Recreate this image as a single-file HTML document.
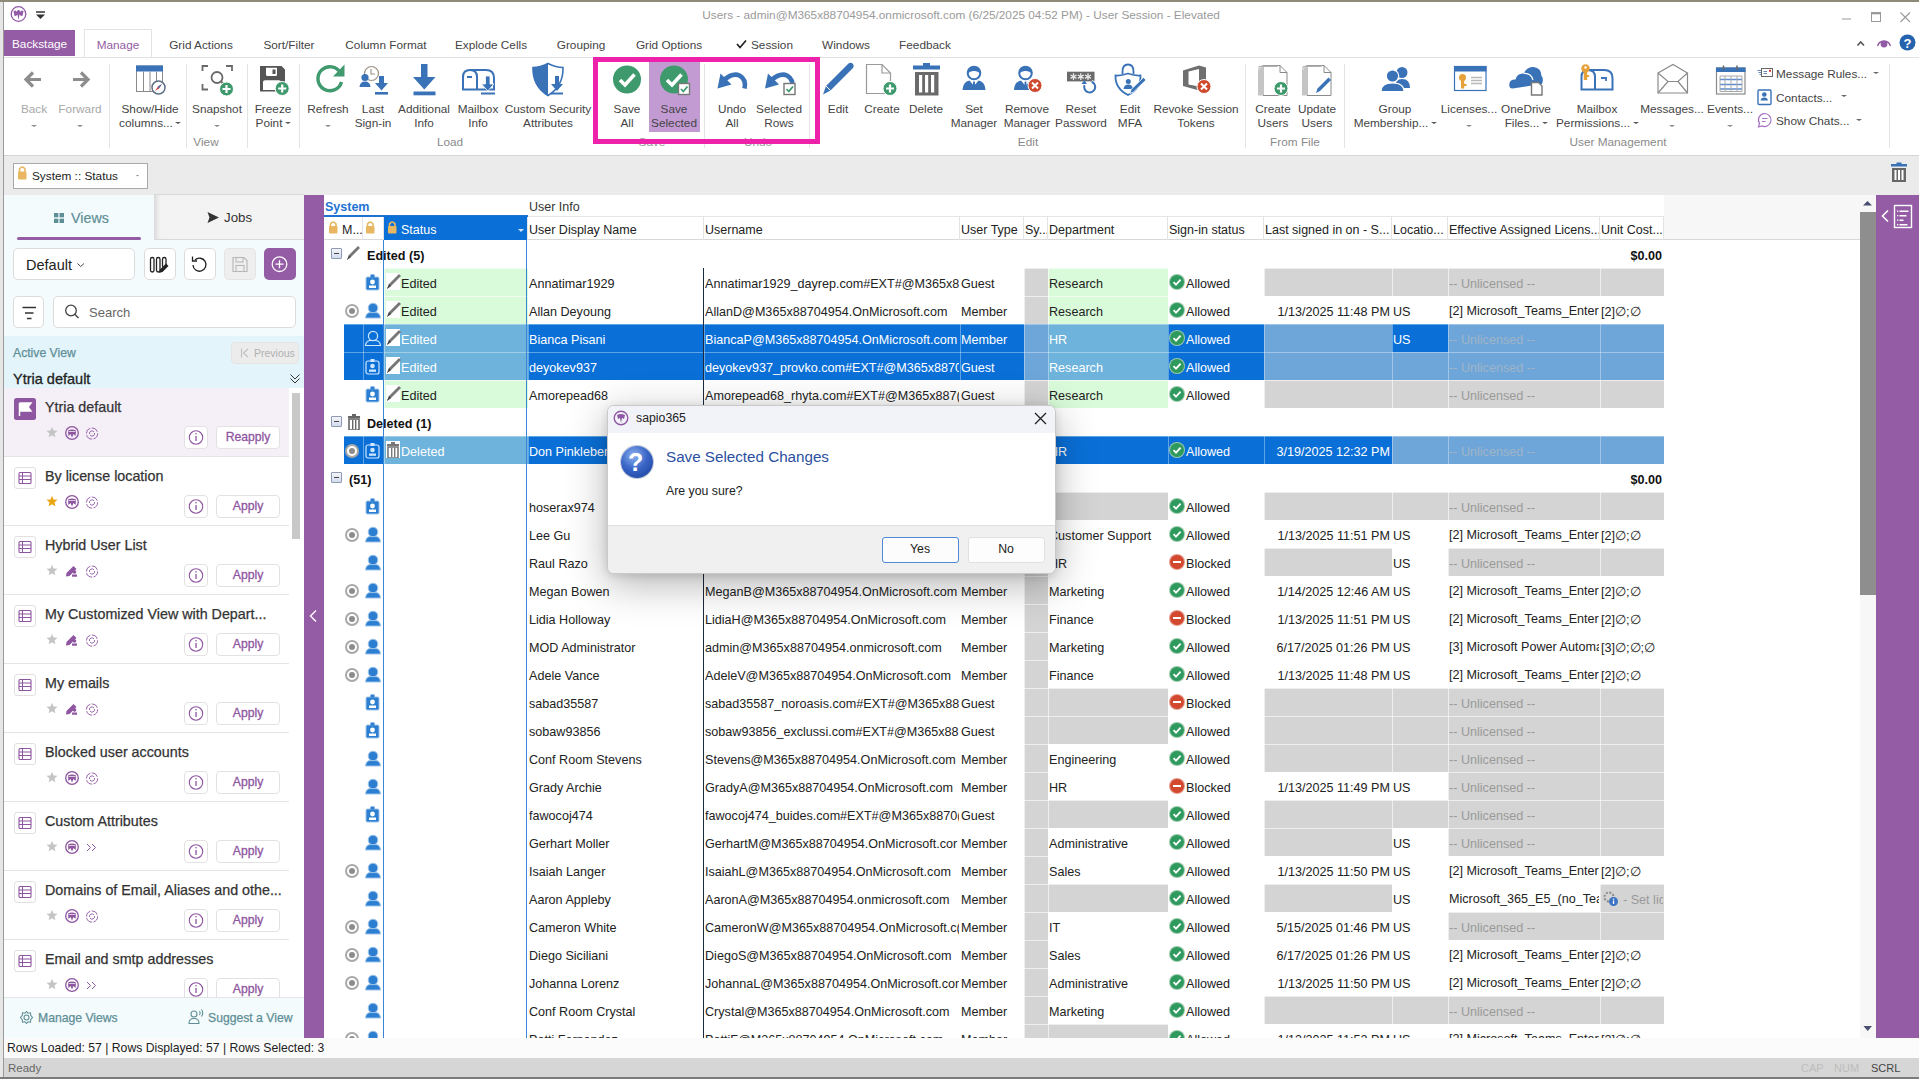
<!DOCTYPE html><html><head><meta charset="utf-8"><style>
html,body{margin:0;padding:0;}
body{width:1919px;height:1079px;position:relative;overflow:hidden;background:#fff;font-family:"Liberation Sans", sans-serif;}
div{box-sizing:border-box;}
</style></head><body>
<div style="position:absolute;left:0px;top:0px;width:1919px;height:1079px;background:#fff"></div>
<div style="position:absolute;left:0px;top:0px;width:4px;height:1079px;background:#e6e6e6"></div>
<div style="position:absolute;left:3px;top:0px;width:1px;height:1079px;background:#9a9a9a"></div>
<div style="position:absolute;left:0px;top:0px;width:1919px;height:2px;background:#8e8a78"></div>
<div style="position:absolute;left:461px;top:10px;width:1000px;text-align:center;font-size:11.8px;color:#9a9a9a;white-space:nowrap;line-height:1;">Users - admin@M365x88704954.onmicrosoft.com (6/25/2025 04:52 PM) - User Session - Elevated</div>
<div style="position:absolute;left:4px;top:30px;width:71px;height:26px;background:#945ca4"></div>
<div style="position:absolute;left:12px;top:39px;font-size:11.8px;color:#fff;white-space:nowrap;line-height:1;">Backstage</div>
<div style="position:absolute;left:84px;top:29px;width:68px;height:29px;background:#fff;border:1px solid #e3e3e3;border-bottom:none"></div>
<div style="position:absolute;left:4px;top:57px;width:1915px;height:1px;background:#e2e2e2"></div>
<div style="position:absolute;left:-382px;top:40px;width:1000px;text-align:center;font-size:11.8px;color:#945ca4;white-space:nowrap;line-height:1;">Manage</div>
<div style="position:absolute;left:-299px;top:40px;width:1000px;text-align:center;font-size:11.8px;color:#444;white-space:nowrap;line-height:1;">Grid Actions</div>
<div style="position:absolute;left:-211px;top:40px;width:1000px;text-align:center;font-size:11.8px;color:#444;white-space:nowrap;line-height:1;">Sort/Filter</div>
<div style="position:absolute;left:-114px;top:40px;width:1000px;text-align:center;font-size:11.8px;color:#444;white-space:nowrap;line-height:1;">Column Format</div>
<div style="position:absolute;left:-9px;top:40px;width:1000px;text-align:center;font-size:11.8px;color:#444;white-space:nowrap;line-height:1;">Explode Cells</div>
<div style="position:absolute;left:81px;top:40px;width:1000px;text-align:center;font-size:11.8px;color:#444;white-space:nowrap;line-height:1;">Grouping</div>
<div style="position:absolute;left:169px;top:40px;width:1000px;text-align:center;font-size:11.8px;color:#444;white-space:nowrap;line-height:1;">Grid Options</div>
<div style="position:absolute;left:272px;top:40px;width:1000px;text-align:center;font-size:11.8px;color:#444;white-space:nowrap;line-height:1;">Session</div>
<div style="position:absolute;left:346px;top:40px;width:1000px;text-align:center;font-size:11.8px;color:#444;white-space:nowrap;line-height:1;">Windows</div>
<div style="position:absolute;left:425px;top:40px;width:1000px;text-align:center;font-size:11.8px;color:#444;white-space:nowrap;line-height:1;">Feedback</div>
<div style="position:absolute;left:4px;top:58px;width:1915px;height:97px;background:#fff"></div>
<div style="position:absolute;left:4px;top:155px;width:1915px;height:1px;background:#d4d4d4"></div>
<div style="position:absolute;left:4px;top:156px;width:1915px;height:39px;background:#ebebeb"></div>
<div style="position:absolute;left:13px;top:163px;width:135px;height:26px;background:#fff;border:1px solid #a9a9a9"></div>
<div style="position:absolute;left:32px;top:171px;font-size:11.8px;color:#222;white-space:nowrap;line-height:1;">System :: Status</div>
<div style="position:absolute;left:4px;top:195px;width:300px;height:843px;background:#f4fbfd"></div>
<div style="position:absolute;left:5px;top:195px;width:149px;height:45px;background:#f4fbfd;border-radius:6px 6px 0 0"></div>
<div style="position:absolute;left:154px;top:194px;width:150px;height:46px;background:#f3f3f3;border-top:1px solid #d9d9d9;border-bottom:1px solid #d9d9d9;box-shadow:inset 6px 0 6px -5px rgba(0,0,0,.18)"></div>
<div style="position:absolute;left:17px;top:237px;width:124px;height:3px;background:#945ca4;border-radius:2px"></div>
<div style="position:absolute;left:71px;top:211px;font-size:14.3px;color:#5f8f96;white-space:nowrap;line-height:1;-webkit-text-stroke:0.2px #5f8f96">Views</div>
<div style="position:absolute;left:224px;top:211px;font-size:13.3px;color:#333;white-space:nowrap;line-height:1;">Jobs</div>
<div style="position:absolute;left:13px;top:248px;width:122px;height:32px;background:#fff;border:1px solid #dcdcdc;border-radius:5px"></div>
<div style="position:absolute;left:26px;top:258px;font-size:14.5px;color:#222;white-space:nowrap;line-height:1;">Default</div>
<div style="position:absolute;left:144px;top:248px;width:32px;height:32px;background:#fff;border:1px solid #dcdcdc;border-radius:5px"></div>
<div style="position:absolute;left:184px;top:248px;width:32px;height:32px;background:#fff;border:1px solid #dcdcdc;border-radius:5px"></div>
<div style="position:absolute;left:224px;top:248px;width:32px;height:32px;background:#efefef;border:1px solid #e4e4e4;border-radius:5px"></div>
<div style="position:absolute;left:264px;top:248px;width:32px;height:32px;background:#945ca4;border-radius:5px"></div>
<div style="position:absolute;left:13px;top:296px;width:31px;height:32px;background:#fff;border:1px solid #dcdcdc;border-radius:5px"></div>
<div style="position:absolute;left:53px;top:296px;width:243px;height:32px;background:#fff;border:1px solid #dcdcdc;border-radius:5px"></div>
<div style="position:absolute;left:89px;top:306px;font-size:13px;color:#666;white-space:nowrap;line-height:1;">Search</div>
<div style="position:absolute;left:4px;top:336px;width:300px;height:52px;background:#e3f4fb"></div>
<div style="position:absolute;left:13px;top:347px;font-size:12.2px;color:#5f8f96;white-space:nowrap;line-height:1;-webkit-text-stroke:0.25px #5f8f96">Active View</div>
<div style="position:absolute;left:231px;top:342px;width:68px;height:22px;background:#ececec;border:1px solid #e4e4e4;border-radius:4px"></div>
<div style="position:absolute;left:254px;top:348px;font-size:10.5px;color:#b0b0b0;white-space:nowrap;line-height:1;">Previous</div>
<div style="position:absolute;left:13px;top:372px;font-size:14.5px;color:#222;white-space:nowrap;line-height:1;-webkit-text-stroke:0.3px #222">Ytria default</div>
<div style="position:absolute;left:4px;top:388px;width:300px;height:609px;background:#fff"></div>
<div style="position:absolute;left:4px;top:388px;width:285px;height:69px;background:#f5eff8;border-bottom:1px solid #e4e4e4"></div>
<div style="position:absolute;left:45px;top:400px;font-size:14.3px;color:#333;white-space:nowrap;line-height:1;-webkit-text-stroke:0.25px #333">Ytria default</div>
<div style="position:absolute;left:184px;top:426px;width:24px;height:23px;background:#fff;border:1px solid #e2e2e2;border-radius:4px"></div>
<div style="position:absolute;left:216px;top:426px;width:64px;height:23px;background:#fff;border:1px solid #e2e2e2;border-radius:4px"></div>
<div style="position:absolute;left:-252px;top:431px;width:1000px;text-align:center;font-size:12.2px;color:#8e55a0;white-space:nowrap;line-height:1;-webkit-text-stroke:0.3px #8e55a0">Reapply</div>
<div style="position:absolute;left:4px;top:457px;width:285px;height:69px;background:#fff;border-bottom:1px solid #e4e4e4"></div>
<div style="position:absolute;left:45px;top:469px;font-size:14.3px;color:#333;white-space:nowrap;line-height:1;-webkit-text-stroke:0.25px #333">By license location</div>
<div style="position:absolute;left:184px;top:495px;width:24px;height:23px;background:#fff;border:1px solid #e2e2e2;border-radius:4px"></div>
<div style="position:absolute;left:216px;top:495px;width:64px;height:23px;background:#fff;border:1px solid #e2e2e2;border-radius:4px"></div>
<div style="position:absolute;left:-252px;top:500px;width:1000px;text-align:center;font-size:12.2px;color:#8e55a0;white-space:nowrap;line-height:1;-webkit-text-stroke:0.3px #8e55a0">Apply</div>
<div style="position:absolute;left:4px;top:526px;width:285px;height:69px;background:#fff;border-bottom:1px solid #e4e4e4"></div>
<div style="position:absolute;left:45px;top:538px;font-size:14.3px;color:#333;white-space:nowrap;line-height:1;-webkit-text-stroke:0.25px #333">Hybrid User List</div>
<div style="position:absolute;left:184px;top:564px;width:24px;height:23px;background:#fff;border:1px solid #e2e2e2;border-radius:4px"></div>
<div style="position:absolute;left:216px;top:564px;width:64px;height:23px;background:#fff;border:1px solid #e2e2e2;border-radius:4px"></div>
<div style="position:absolute;left:-252px;top:569px;width:1000px;text-align:center;font-size:12.2px;color:#8e55a0;white-space:nowrap;line-height:1;-webkit-text-stroke:0.3px #8e55a0">Apply</div>
<div style="position:absolute;left:4px;top:595px;width:285px;height:69px;background:#fff;border-bottom:1px solid #e4e4e4"></div>
<div style="position:absolute;left:45px;top:607px;font-size:14.3px;color:#333;white-space:nowrap;line-height:1;-webkit-text-stroke:0.25px #333">My Customized View with Depart...</div>
<div style="position:absolute;left:184px;top:633px;width:24px;height:23px;background:#fff;border:1px solid #e2e2e2;border-radius:4px"></div>
<div style="position:absolute;left:216px;top:633px;width:64px;height:23px;background:#fff;border:1px solid #e2e2e2;border-radius:4px"></div>
<div style="position:absolute;left:-252px;top:638px;width:1000px;text-align:center;font-size:12.2px;color:#8e55a0;white-space:nowrap;line-height:1;-webkit-text-stroke:0.3px #8e55a0">Apply</div>
<div style="position:absolute;left:4px;top:664px;width:285px;height:69px;background:#fff;border-bottom:1px solid #e4e4e4"></div>
<div style="position:absolute;left:45px;top:676px;font-size:14.3px;color:#333;white-space:nowrap;line-height:1;-webkit-text-stroke:0.25px #333">My emails</div>
<div style="position:absolute;left:184px;top:702px;width:24px;height:23px;background:#fff;border:1px solid #e2e2e2;border-radius:4px"></div>
<div style="position:absolute;left:216px;top:702px;width:64px;height:23px;background:#fff;border:1px solid #e2e2e2;border-radius:4px"></div>
<div style="position:absolute;left:-252px;top:707px;width:1000px;text-align:center;font-size:12.2px;color:#8e55a0;white-space:nowrap;line-height:1;-webkit-text-stroke:0.3px #8e55a0">Apply</div>
<div style="position:absolute;left:4px;top:733px;width:285px;height:69px;background:#fff;border-bottom:1px solid #e4e4e4"></div>
<div style="position:absolute;left:45px;top:745px;font-size:14.3px;color:#333;white-space:nowrap;line-height:1;-webkit-text-stroke:0.25px #333">Blocked user accounts</div>
<div style="position:absolute;left:184px;top:771px;width:24px;height:23px;background:#fff;border:1px solid #e2e2e2;border-radius:4px"></div>
<div style="position:absolute;left:216px;top:771px;width:64px;height:23px;background:#fff;border:1px solid #e2e2e2;border-radius:4px"></div>
<div style="position:absolute;left:-252px;top:776px;width:1000px;text-align:center;font-size:12.2px;color:#8e55a0;white-space:nowrap;line-height:1;-webkit-text-stroke:0.3px #8e55a0">Apply</div>
<div style="position:absolute;left:4px;top:802px;width:285px;height:69px;background:#fff;border-bottom:1px solid #e4e4e4"></div>
<div style="position:absolute;left:45px;top:814px;font-size:14.3px;color:#333;white-space:nowrap;line-height:1;-webkit-text-stroke:0.25px #333">Custom Attributes</div>
<div style="position:absolute;left:184px;top:840px;width:24px;height:23px;background:#fff;border:1px solid #e2e2e2;border-radius:4px"></div>
<div style="position:absolute;left:216px;top:840px;width:64px;height:23px;background:#fff;border:1px solid #e2e2e2;border-radius:4px"></div>
<div style="position:absolute;left:-252px;top:845px;width:1000px;text-align:center;font-size:12.2px;color:#8e55a0;white-space:nowrap;line-height:1;-webkit-text-stroke:0.3px #8e55a0">Apply</div>
<div style="position:absolute;left:4px;top:871px;width:285px;height:69px;background:#fff;border-bottom:1px solid #e4e4e4"></div>
<div style="position:absolute;left:45px;top:883px;font-size:14.3px;color:#333;white-space:nowrap;line-height:1;-webkit-text-stroke:0.25px #333">Domains of Email, Aliases and othe...</div>
<div style="position:absolute;left:184px;top:909px;width:24px;height:23px;background:#fff;border:1px solid #e2e2e2;border-radius:4px"></div>
<div style="position:absolute;left:216px;top:909px;width:64px;height:23px;background:#fff;border:1px solid #e2e2e2;border-radius:4px"></div>
<div style="position:absolute;left:-252px;top:914px;width:1000px;text-align:center;font-size:12.2px;color:#8e55a0;white-space:nowrap;line-height:1;-webkit-text-stroke:0.3px #8e55a0">Apply</div>
<div style="position:absolute;left:4px;top:940px;width:285px;height:69px;background:#fff;border-bottom:1px solid #e4e4e4"></div>
<div style="position:absolute;left:45px;top:952px;font-size:14.3px;color:#333;white-space:nowrap;line-height:1;-webkit-text-stroke:0.25px #333">Email and smtp addresses</div>
<div style="position:absolute;left:184px;top:978px;width:24px;height:23px;background:#fff;border:1px solid #e2e2e2;border-radius:4px"></div>
<div style="position:absolute;left:216px;top:978px;width:64px;height:23px;background:#fff;border:1px solid #e2e2e2;border-radius:4px"></div>
<div style="position:absolute;left:-252px;top:983px;width:1000px;text-align:center;font-size:12.2px;color:#8e55a0;white-space:nowrap;line-height:1;-webkit-text-stroke:0.3px #8e55a0">Apply</div>
<div style="position:absolute;left:292px;top:393px;width:8px;height:146px;background:#c8c8c8"></div>
<div style="position:absolute;left:4px;top:997px;width:300px;height:41px;background:#f4fbfd;border-top:1px solid #e4e4e4"></div>
<div style="position:absolute;left:38px;top:1012px;font-size:12.2px;color:#5f8f96;white-space:nowrap;line-height:1;-webkit-text-stroke:0.25px #5f8f96">Manage Views</div>
<div style="position:absolute;left:208px;top:1012px;font-size:12.2px;color:#5f8f96;white-space:nowrap;line-height:1;-webkit-text-stroke:0.25px #5f8f96">Suggest a View</div>
<div style="position:absolute;left:304px;top:195px;width:20px;height:843px;background:#945ca4"></div>
<svg style="position:absolute;left:0;top:190px" width="310" height="850" viewBox="0 190 310 850"><rect x="54" y="213" width="4.3" height="4.3" fill="#5f8f96"/><rect x="59.5" y="213" width="4.5" height="4.3" fill="#5f8f96"/><rect x="54" y="218.7" width="4.3" height="4.3" fill="#5f8f96"/><rect x="59.5" y="218.7" width="4.5" height="4.3" fill="#5f8f96"/><path d="M207.5 212 L219 217.5 L207.5 223 L209.5 217.5Z" fill="#333"/><path d="M77.5 263.5 L80.7 266.5 L84 263.5" stroke="#444" stroke-width="1" fill="none"/><rect x="150.5" y="257.5" width="3.5" height="14.5" rx="1.7" fill="none" stroke="#222" stroke-width="1.3"/><rect x="156.5" y="257.5" width="3.5" height="14.5" rx="1.7" fill="none" stroke="#222" stroke-width="1.3"/><rect x="162.5" y="257.5" width="3.5" height="10" rx="1.7" fill="none" stroke="#222" stroke-width="1.3"/><path d="M159 273 L160 269.5 L166 263.5 L168.5 266 L162.5 272Z" fill="#222"/><path d="M195 260 A6.5 6.5 0 1 1 193 265" stroke="#222" stroke-width="1.3" fill="none"/><path d="M192.5 256.5 V261 H197" stroke="#222" stroke-width="1.3" fill="none"/><path d="M233 257.5 H244 L247 260.5 V271.5 H233Z" fill="none" stroke="#b8b8b8" stroke-width="1.2"/><rect x="236" y="257.5" width="7" height="4.5" fill="none" stroke="#b8b8b8" stroke-width="1.1"/><rect x="236" y="265.5" width="8" height="6" fill="none" stroke="#b8b8b8" stroke-width="1.1"/><circle cx="279.5" cy="264.2" r="7.3" fill="none" stroke="#fff" stroke-width="1.3"/><path d="M275.5 264.2 H283.5 M279.5 260.2 V268.2" stroke="#fff" stroke-width="1.3"/><path d="M22.5 307.5 H36 M25 313 H33.5 M27 318.5 H31.5" stroke="#333" stroke-width="1.5"/><circle cx="71" cy="310.5" r="5.3" fill="none" stroke="#444" stroke-width="1.3"/><path d="M74.8 314.3 L78.5 318" stroke="#444" stroke-width="1.4"/><path d="M241.5 348.5 V357.5 M248 349 L243.5 353 L248 357" stroke="#c0c0c0" stroke-width="1.1" fill="none"/><path d="M290.5 374.5 L295 379 L299.5 374.5 M290.5 378.5 L295 383 L299.5 378.5" stroke="#333" stroke-width="1" fill="none"/><polygon points="52.00,426.80 53.53,430.50 57.52,430.81 54.47,433.40 55.41,437.29 52.00,435.20 48.59,437.29 49.53,433.40 46.48,430.81 50.47,430.50" fill="#c4c4c4"/><circle cx="72" cy="433" r="6.3" fill="none" stroke="#8e55a0" stroke-width="1.3"/><path d="M68 430.5 Q72 428.5 76 430.5 L75.6 436 L73.5 434 L72 437.5 L70.5 434 L68.4 436Z" fill="#8e55a0"/><path d="M68.5 431.5 H75.5" stroke="#fff" stroke-width="0.7"/><circle cx="92" cy="433.5" r="5.6" fill="none" stroke="#8e55a0" stroke-width="0.9" stroke-dasharray="7 1.5"/><path d="M89.5 434.0 A2.5 2.5 0 0 1 94 432.0 M94.5 433.0 A2.5 2.5 0 0 1 90 435.0" stroke="#8e55a0" stroke-width="0.9" fill="none"/><circle cx="196" cy="437.5" r="6.7" fill="none" stroke="#8e55a0" stroke-width="1.1"/><rect x="195.4" y="436" width="1.3" height="5" fill="#8e55a0"/><circle cx="196" cy="433.8" r="0.8" fill="#8e55a0"/><rect x="14" y="398" width="22" height="22" rx="2.5" fill="#8e55a0"/><path d="M19.5 403 V416 M19.5 403 H31 L28 407 L31 411 H19.5" fill="#fff" stroke="#fff" stroke-width="1.5"/><polygon points="52.00,495.80 53.53,499.50 57.52,499.81 54.47,502.40 55.41,506.29 52.00,504.20 48.59,506.29 49.53,502.40 46.48,499.81 50.47,499.50" fill="#eaa514"/><circle cx="72" cy="502" r="6.3" fill="none" stroke="#8e55a0" stroke-width="1.3"/><path d="M68 499.5 Q72 497.5 76 499.5 L75.6 505 L73.5 503 L72 506.5 L70.5 503 L68.4 505Z" fill="#8e55a0"/><path d="M68.5 500.5 H75.5" stroke="#fff" stroke-width="0.7"/><circle cx="92" cy="502.5" r="5.6" fill="none" stroke="#8e55a0" stroke-width="0.9" stroke-dasharray="7 1.5"/><path d="M89.5 503.0 A2.5 2.5 0 0 1 94 501.0 M94.5 502.0 A2.5 2.5 0 0 1 90 504.0" stroke="#8e55a0" stroke-width="0.9" fill="none"/><circle cx="196" cy="506.5" r="6.7" fill="none" stroke="#8e55a0" stroke-width="1.1"/><rect x="195.4" y="505" width="1.3" height="5" fill="#8e55a0"/><circle cx="196" cy="502.8" r="0.8" fill="#8e55a0"/><rect x="14.5" y="467.5" width="21" height="21" rx="2.5" fill="#fff" stroke="#e0e0e0" stroke-width="1"/><rect x="19" y="472.5" width="12" height="11" rx="1" fill="none" stroke="#8e55a0" stroke-width="1.1"/><path d="M19 476 H31 M19 479.5 H31 M22.5 472.5 V483.5" stroke="#8e55a0" stroke-width="1"/><polygon points="52.00,564.80 53.53,568.50 57.52,568.81 54.47,571.40 55.41,575.29 52.00,573.20 48.59,575.29 49.53,571.40 46.48,568.81 50.47,568.50" fill="#c4c4c4"/><path d="M66.0 576.5 L66.5 573 L73.5 566 L76.5 569 L69.5 576Z" fill="#8e55a0"/><circle cx="74.5" cy="572" r="1.8" fill="#8e55a0"/><rect x="72.0" y="574.5" width="5" height="2.2" fill="#8e55a0"/><circle cx="92" cy="571.5" r="5.6" fill="none" stroke="#8e55a0" stroke-width="0.9" stroke-dasharray="7 1.5"/><path d="M89.5 572.0 A2.5 2.5 0 0 1 94 570.0 M94.5 571.0 A2.5 2.5 0 0 1 90 573.0" stroke="#8e55a0" stroke-width="0.9" fill="none"/><circle cx="196" cy="575.5" r="6.7" fill="none" stroke="#8e55a0" stroke-width="1.1"/><rect x="195.4" y="574" width="1.3" height="5" fill="#8e55a0"/><circle cx="196" cy="571.8" r="0.8" fill="#8e55a0"/><rect x="14.5" y="536.5" width="21" height="21" rx="2.5" fill="#fff" stroke="#e0e0e0" stroke-width="1"/><rect x="19" y="541.5" width="12" height="11" rx="1" fill="none" stroke="#8e55a0" stroke-width="1.1"/><path d="M19 545 H31 M19 548.5 H31 M22.5 541.5 V552.5" stroke="#8e55a0" stroke-width="1"/><polygon points="52.00,633.80 53.53,637.50 57.52,637.81 54.47,640.40 55.41,644.29 52.00,642.20 48.59,644.29 49.53,640.40 46.48,637.81 50.47,637.50" fill="#c4c4c4"/><path d="M66.0 645.5 L66.5 642 L73.5 635 L76.5 638 L69.5 645Z" fill="#8e55a0"/><circle cx="74.5" cy="641" r="1.8" fill="#8e55a0"/><rect x="72.0" y="643.5" width="5" height="2.2" fill="#8e55a0"/><circle cx="92" cy="640.5" r="5.6" fill="none" stroke="#8e55a0" stroke-width="0.9" stroke-dasharray="7 1.5"/><path d="M89.5 641.0 A2.5 2.5 0 0 1 94 639.0 M94.5 640.0 A2.5 2.5 0 0 1 90 642.0" stroke="#8e55a0" stroke-width="0.9" fill="none"/><circle cx="196" cy="644.5" r="6.7" fill="none" stroke="#8e55a0" stroke-width="1.1"/><rect x="195.4" y="643" width="1.3" height="5" fill="#8e55a0"/><circle cx="196" cy="640.8" r="0.8" fill="#8e55a0"/><rect x="14.5" y="605.5" width="21" height="21" rx="2.5" fill="#fff" stroke="#e0e0e0" stroke-width="1"/><rect x="19" y="610.5" width="12" height="11" rx="1" fill="none" stroke="#8e55a0" stroke-width="1.1"/><path d="M19 614 H31 M19 617.5 H31 M22.5 610.5 V621.5" stroke="#8e55a0" stroke-width="1"/><polygon points="52.00,702.80 53.53,706.50 57.52,706.81 54.47,709.40 55.41,713.29 52.00,711.20 48.59,713.29 49.53,709.40 46.48,706.81 50.47,706.50" fill="#c4c4c4"/><path d="M66.0 714.5 L66.5 711 L73.5 704 L76.5 707 L69.5 714Z" fill="#8e55a0"/><circle cx="74.5" cy="710" r="1.8" fill="#8e55a0"/><rect x="72.0" y="712.5" width="5" height="2.2" fill="#8e55a0"/><circle cx="92" cy="709.5" r="5.6" fill="none" stroke="#8e55a0" stroke-width="0.9" stroke-dasharray="7 1.5"/><path d="M89.5 710.0 A2.5 2.5 0 0 1 94 708.0 M94.5 709.0 A2.5 2.5 0 0 1 90 711.0" stroke="#8e55a0" stroke-width="0.9" fill="none"/><circle cx="196" cy="713.5" r="6.7" fill="none" stroke="#8e55a0" stroke-width="1.1"/><rect x="195.4" y="712" width="1.3" height="5" fill="#8e55a0"/><circle cx="196" cy="709.8" r="0.8" fill="#8e55a0"/><rect x="14.5" y="674.5" width="21" height="21" rx="2.5" fill="#fff" stroke="#e0e0e0" stroke-width="1"/><rect x="19" y="679.5" width="12" height="11" rx="1" fill="none" stroke="#8e55a0" stroke-width="1.1"/><path d="M19 683 H31 M19 686.5 H31 M22.5 679.5 V690.5" stroke="#8e55a0" stroke-width="1"/><polygon points="52.00,771.80 53.53,775.50 57.52,775.81 54.47,778.40 55.41,782.29 52.00,780.20 48.59,782.29 49.53,778.40 46.48,775.81 50.47,775.50" fill="#c4c4c4"/><circle cx="72" cy="778" r="6.3" fill="none" stroke="#8e55a0" stroke-width="1.3"/><path d="M68 775.5 Q72 773.5 76 775.5 L75.6 781 L73.5 779 L72 782.5 L70.5 779 L68.4 781Z" fill="#8e55a0"/><path d="M68.5 776.5 H75.5" stroke="#fff" stroke-width="0.7"/><circle cx="92" cy="778.5" r="5.6" fill="none" stroke="#8e55a0" stroke-width="0.9" stroke-dasharray="7 1.5"/><path d="M89.5 779.0 A2.5 2.5 0 0 1 94 777.0 M94.5 778.0 A2.5 2.5 0 0 1 90 780.0" stroke="#8e55a0" stroke-width="0.9" fill="none"/><circle cx="196" cy="782.5" r="6.7" fill="none" stroke="#8e55a0" stroke-width="1.1"/><rect x="195.4" y="781" width="1.3" height="5" fill="#8e55a0"/><circle cx="196" cy="778.8" r="0.8" fill="#8e55a0"/><rect x="14.5" y="743.5" width="21" height="21" rx="2.5" fill="#fff" stroke="#e0e0e0" stroke-width="1"/><rect x="19" y="748.5" width="12" height="11" rx="1" fill="none" stroke="#8e55a0" stroke-width="1.1"/><path d="M19 752 H31 M19 755.5 H31 M22.5 748.5 V759.5" stroke="#8e55a0" stroke-width="1"/><polygon points="52.00,840.80 53.53,844.50 57.52,844.81 54.47,847.40 55.41,851.29 52.00,849.20 48.59,851.29 49.53,847.40 46.48,844.81 50.47,844.50" fill="#c4c4c4"/><circle cx="72" cy="847" r="6.3" fill="none" stroke="#8e55a0" stroke-width="1.3"/><path d="M68 844.5 Q72 842.5 76 844.5 L75.6 850 L73.5 848 L72 851.5 L70.5 848 L68.4 850Z" fill="#8e55a0"/><path d="M68.5 845.5 H75.5" stroke="#fff" stroke-width="0.7"/><path d="M87 844.0 L90.5 847.5 L87 851.0 M92 844.0 L95.5 847.5 L92 851.0" stroke="#8e55a0" stroke-width="1" fill="none"/><circle cx="196" cy="851.5" r="6.7" fill="none" stroke="#8e55a0" stroke-width="1.1"/><rect x="195.4" y="850" width="1.3" height="5" fill="#8e55a0"/><circle cx="196" cy="847.8" r="0.8" fill="#8e55a0"/><rect x="14.5" y="812.5" width="21" height="21" rx="2.5" fill="#fff" stroke="#e0e0e0" stroke-width="1"/><rect x="19" y="817.5" width="12" height="11" rx="1" fill="none" stroke="#8e55a0" stroke-width="1.1"/><path d="M19 821 H31 M19 824.5 H31 M22.5 817.5 V828.5" stroke="#8e55a0" stroke-width="1"/><polygon points="52.00,909.80 53.53,913.50 57.52,913.81 54.47,916.40 55.41,920.29 52.00,918.20 48.59,920.29 49.53,916.40 46.48,913.81 50.47,913.50" fill="#c4c4c4"/><circle cx="72" cy="916" r="6.3" fill="none" stroke="#8e55a0" stroke-width="1.3"/><path d="M68 913.5 Q72 911.5 76 913.5 L75.6 919 L73.5 917 L72 920.5 L70.5 917 L68.4 919Z" fill="#8e55a0"/><path d="M68.5 914.5 H75.5" stroke="#fff" stroke-width="0.7"/><circle cx="92" cy="916.5" r="5.6" fill="none" stroke="#8e55a0" stroke-width="0.9" stroke-dasharray="7 1.5"/><path d="M89.5 917.0 A2.5 2.5 0 0 1 94 915.0 M94.5 916.0 A2.5 2.5 0 0 1 90 918.0" stroke="#8e55a0" stroke-width="0.9" fill="none"/><circle cx="196" cy="920.5" r="6.7" fill="none" stroke="#8e55a0" stroke-width="1.1"/><rect x="195.4" y="919" width="1.3" height="5" fill="#8e55a0"/><circle cx="196" cy="916.8" r="0.8" fill="#8e55a0"/><rect x="14.5" y="881.5" width="21" height="21" rx="2.5" fill="#fff" stroke="#e0e0e0" stroke-width="1"/><rect x="19" y="886.5" width="12" height="11" rx="1" fill="none" stroke="#8e55a0" stroke-width="1.1"/><path d="M19 890 H31 M19 893.5 H31 M22.5 886.5 V897.5" stroke="#8e55a0" stroke-width="1"/><polygon points="52.00,978.80 53.53,982.50 57.52,982.81 54.47,985.40 55.41,989.29 52.00,987.20 48.59,989.29 49.53,985.40 46.48,982.81 50.47,982.50" fill="#c4c4c4"/><circle cx="72" cy="985" r="6.3" fill="none" stroke="#8e55a0" stroke-width="1.3"/><path d="M68 982.5 Q72 980.5 76 982.5 L75.6 988 L73.5 986 L72 989.5 L70.5 986 L68.4 988Z" fill="#8e55a0"/><path d="M68.5 983.5 H75.5" stroke="#fff" stroke-width="0.7"/><path d="M87 982.0 L90.5 985.5 L87 989.0 M92 982.0 L95.5 985.5 L92 989.0" stroke="#8e55a0" stroke-width="1" fill="none"/><circle cx="196" cy="989.5" r="6.7" fill="none" stroke="#8e55a0" stroke-width="1.1"/><rect x="195.4" y="988" width="1.3" height="5" fill="#8e55a0"/><circle cx="196" cy="985.8" r="0.8" fill="#8e55a0"/><rect x="14.5" y="950.5" width="21" height="21" rx="2.5" fill="#fff" stroke="#e0e0e0" stroke-width="1"/><rect x="19" y="955.5" width="12" height="11" rx="1" fill="none" stroke="#8e55a0" stroke-width="1.1"/><path d="M19 959 H31 M19 962.5 H31 M22.5 955.5 V966.5" stroke="#8e55a0" stroke-width="1"/><g stroke="#5f8f96" fill="none" stroke-width="1.1"><circle cx="26.5" cy="1017.5" r="2.5"/><path d="M26.5 1011.5 L28 1013.2 L30.5 1012.8 L30.7 1015.3 L32.5 1017.5 L30.7 1019.7 L30.5 1022.2 L28 1021.8 L26.5 1023.5 L25 1021.8 L22.5 1022.2 L22.3 1019.7 L20.5 1017.5 L22.3 1015.3 L22.5 1012.8 L25 1013.2Z"/></g><g stroke="#5f8f96" fill="none" stroke-width="1.1"><circle cx="194" cy="1014" r="3"/><path d="M189 1023.5 Q189 1018.5 194 1018.5 Q199 1018.5 199 1023.5Z"/><path d="M199.5 1011 Q201 1013 199.5 1015 M201.5 1009.5 Q204 1013 201.5 1016.5"/></g></svg>
<div style="position:absolute;left:4px;top:1038px;width:1915px;height:20px;background:#fbfbfb"></div>
<div style="position:absolute;left:7px;top:1042px;font-size:12.2px;color:#222;white-space:nowrap;line-height:1;">Rows Loaded: 57 | Rows Displayed: 57 | Rows Selected: 3</div>
<div style="position:absolute;left:4px;top:1058px;width:1915px;height:19px;background:#d6d6d6"></div>
<div style="position:absolute;left:8px;top:1063px;font-size:11.5px;color:#666;white-space:nowrap;line-height:1;">Ready</div>
<div style="position:absolute;left:1801px;top:1063px;font-size:11px;color:#bdbdbd;white-space:nowrap;line-height:1;">CAP</div>
<div style="position:absolute;left:1834px;top:1063px;font-size:11px;color:#bdbdbd;white-space:nowrap;line-height:1;">NUM</div>
<div style="position:absolute;left:1871px;top:1063px;font-size:11px;color:#444;white-space:nowrap;line-height:1;">SCRL</div>
<div style="position:absolute;left:0px;top:1077px;width:1919px;height:2px;background:#7b7b7b"></div>
<div style="position:absolute;left:1860px;top:195px;width:16px;height:843px;background:#f7f7f7"></div>
<div style="position:absolute;left:1860px;top:212px;width:16px;height:383px;background:#8e8e8e"></div>
<div style="position:absolute;left:1876px;top:195px;width:43px;height:843px;background:#945ca4"></div>
<div style="position:absolute;left:324px;top:195px;width:1536px;height:843px;background:#fff"></div>
<div style="position:absolute;left:1664px;top:195px;width:196px;height:45px;background:#f7f7f7;border-bottom:1px solid #d8d8d8"></div>
<div style="position:absolute;left:324px;top:216px;width:1340px;height:1px;background:#e6e6e6"></div>
<div style="position:absolute;left:324px;top:239px;width:1340px;height:1px;background:#d8d8d8"></div>
<div style="position:absolute;left:324px;top:215px;width:204px;height:2px;background:#1e73d2"></div>
<div style="position:absolute;left:325px;top:201px;font-size:12.5px;color:#1e73d2;white-space:nowrap;line-height:1;font-weight:bold">System</div>
<div style="position:absolute;left:529px;top:201px;font-size:12.5px;color:#333;white-space:nowrap;line-height:1;">User Info</div>
<div style="position:absolute;left:384px;top:216px;width:144px;height:24px;background:#0a6fd6"></div>
<div style="position:absolute;left:342px;top:224px;font-size:12.5px;color:#222;white-space:nowrap;line-height:1;">M...</div>
<div style="position:absolute;left:401px;top:224px;font-size:12.5px;color:#fff;white-space:nowrap;line-height:1;">Status</div>
<div style="position:absolute;left:529px;top:224px;font-size:12.5px;color:#222;white-space:nowrap;line-height:1;">User Display Name</div>
<div style="position:absolute;left:705px;top:224px;font-size:12.5px;color:#222;white-space:nowrap;line-height:1;">Username</div>
<div style="position:absolute;left:961px;top:224px;font-size:12.5px;color:#222;white-space:nowrap;line-height:1;">User Type</div>
<div style="position:absolute;left:1025px;top:224px;font-size:12.5px;color:#222;white-space:nowrap;line-height:1;">Sy...</div>
<div style="position:absolute;left:1049px;top:224px;font-size:12.5px;color:#222;white-space:nowrap;line-height:1;">Department</div>
<div style="position:absolute;left:1169px;top:224px;font-size:12.5px;color:#222;white-space:nowrap;line-height:1;">Sign-in status</div>
<div style="position:absolute;left:1265px;top:224px;font-size:12.5px;color:#222;white-space:nowrap;line-height:1;">Last signed in on - S...</div>
<div style="position:absolute;left:1393px;top:224px;font-size:12.5px;color:#222;white-space:nowrap;line-height:1;">Locatio...</div>
<div style="position:absolute;left:1449px;top:224px;font-size:12.5px;color:#222;white-space:nowrap;line-height:1;">Effective Assigned Licens...</div>
<div style="position:absolute;left:1601px;top:224px;font-size:12.5px;color:#222;white-space:nowrap;line-height:1;">Unit Cost...</div>
<div style="position:absolute;left:362px;top:217px;width:1px;height:23px;background:#e4e4e4"></div>
<div style="position:absolute;left:383px;top:217px;width:1px;height:23px;background:#e4e4e4"></div>
<div style="position:absolute;left:527px;top:217px;width:1px;height:23px;background:#e4e4e4"></div>
<div style="position:absolute;left:703px;top:217px;width:1px;height:23px;background:#e4e4e4"></div>
<div style="position:absolute;left:959px;top:217px;width:1px;height:23px;background:#e4e4e4"></div>
<div style="position:absolute;left:1023px;top:217px;width:1px;height:23px;background:#e4e4e4"></div>
<div style="position:absolute;left:1047px;top:217px;width:1px;height:23px;background:#e4e4e4"></div>
<div style="position:absolute;left:1167px;top:217px;width:1px;height:23px;background:#e4e4e4"></div>
<div style="position:absolute;left:1263px;top:217px;width:1px;height:23px;background:#e4e4e4"></div>
<div style="position:absolute;left:1391px;top:217px;width:1px;height:23px;background:#e4e4e4"></div>
<div style="position:absolute;left:1447px;top:217px;width:1px;height:23px;background:#e4e4e4"></div>
<div style="position:absolute;left:1599px;top:217px;width:1px;height:23px;background:#e4e4e4"></div>
<div style="position:absolute;left:1663px;top:217px;width:1px;height:23px;background:#e4e4e4"></div>
<svg style="position:absolute;left:0;top:0" width="1919" height="240"><rect x="329" y="226" width="8.5" height="7.5" rx="1" fill="#e9b761"/><path d="M330.5 226.5 V224 Q333.25 220 336 224 V226.5" stroke="#e9b761" stroke-width="1.6" fill="none"/><rect x="366" y="226" width="8.5" height="7.5" rx="1" fill="#e9b761"/><path d="M367.5 226.5 V224 Q370.25 220 373 224 V226.5" stroke="#e9b761" stroke-width="1.6" fill="none"/><rect x="388" y="226" width="8.5" height="7.5" rx="1" fill="#e9b761"/><path d="M389.5 226.5 V224 Q392.25 220 395 224 V226.5" stroke="#e9b761" stroke-width="1.6" fill="none"/><path d="M518 229 L524 229 L521 232Z" fill="#cfe2f7"/></svg>
<div style="position:absolute;left:0;top:0;width:1919px;height:1038px;overflow:hidden;clip-path:inset(240px 0 0 0)"><div style="position:absolute;left:331px;top:248px;width:11px;height:11px;background:linear-gradient(#f4f6fb,#d5dbea);border:1px solid #8d9ab5;border-radius:1px"></div><div style="position:absolute;left:334px;top:253px;width:5px;height:1px;background:#445"></div><div style="position:absolute;left:367px;top:250px;font-size:12.6px;color:#111;white-space:nowrap;line-height:1;font-weight:bold">Edited (5)</div><div style="position:absolute;left:1600px;top:250px;font-size:12.6px;color:#111;white-space:nowrap;line-height:1;font-weight:bold;width:62px;text-align:right">$0.00</div><svg style="position:absolute;left:345px;top:245px" width="16" height="17" viewBox="0 0 16 17"><path d="M2 15 L4 10 L13 1 L15 3 L6 12 Z" fill="#777"/><path d="M2 15 L4 10 L6 12Z" fill="#555"/></svg><div style="position:absolute;left:384px;top:268px;width:144px;height:28px;background:#d9fbd9"></div><div style="position:absolute;left:1024px;top:268px;width:24px;height:28px;background:#d4d4d4"></div><div style="position:absolute;left:1048px;top:268px;width:120px;height:28px;background:#d9fbd9"></div><div style="position:absolute;left:1264px;top:268px;width:128px;height:28px;background:#d4d4d4"></div><div style="position:absolute;left:1392px;top:268px;width:56px;height:28px;background:#d4d4d4"></div><div style="position:absolute;left:1448px;top:268px;width:216px;height:28px;background:#d4d4d4"></div><div style="position:absolute;left:344px;top:268px;width:1320px;height:1px;background:rgba(255,255,255,0.6)"></div><div style="position:absolute;left:363px;top:268px;width:1px;height:28px;background:rgba(255,255,255,0.6)"></div><div style="position:absolute;left:384px;top:268px;width:1px;height:28px;background:rgba(255,255,255,0.6)"></div><div style="position:absolute;left:528px;top:268px;width:1px;height:28px;background:rgba(255,255,255,0.6)"></div><div style="position:absolute;left:704px;top:268px;width:1px;height:28px;background:rgba(255,255,255,0.6)"></div><div style="position:absolute;left:960px;top:268px;width:1px;height:28px;background:rgba(255,255,255,0.6)"></div><div style="position:absolute;left:1024px;top:268px;width:1px;height:28px;background:rgba(255,255,255,0.6)"></div><div style="position:absolute;left:1048px;top:268px;width:1px;height:28px;background:rgba(255,255,255,0.6)"></div><div style="position:absolute;left:1168px;top:268px;width:1px;height:28px;background:rgba(255,255,255,0.6)"></div><div style="position:absolute;left:1264px;top:268px;width:1px;height:28px;background:rgba(255,255,255,0.6)"></div><div style="position:absolute;left:1392px;top:268px;width:1px;height:28px;background:rgba(255,255,255,0.6)"></div><div style="position:absolute;left:1448px;top:268px;width:1px;height:28px;background:rgba(255,255,255,0.6)"></div><div style="position:absolute;left:1600px;top:268px;width:1px;height:28px;background:rgba(255,255,255,0.6)"></div><div style="position:absolute;left:1664px;top:268px;width:1px;height:28px;background:rgba(255,255,255,0.6)"></div><div style="position:absolute;left:401px;top:278px;font-size:12.6px;color:#222;white-space:nowrap;line-height:1;">Edited</div><div style="position:absolute;left:529px;top:278px;font-size:12.6px;color:#222;white-space:nowrap;line-height:1;">Annatimar1929</div><div style="position:absolute;left:705px;top:278px;font-size:12.6px;color:#222;white-space:nowrap;line-height:1;width:254px;overflow:hidden">Annatimar1929_dayrep.com#EXT#@M365x8(</div><div style="position:absolute;left:961px;top:278px;font-size:12.6px;color:#222;white-space:nowrap;line-height:1;">Guest</div><div style="position:absolute;left:1049px;top:278px;font-size:12.6px;color:#222;white-space:nowrap;line-height:1;">Research</div><div style="position:absolute;left:1170px;top:275px;width:14px;height:14px;background:#2e9a5e;border-radius:50%;box-shadow:0 0 0 1px #9bc9ad"></div><svg style="position:absolute;left:1170px;top:275px" width="14" height="14" viewBox="0 0 14 14"><path d="M3.5 7.2 L6 9.6 L10.6 4.6" stroke="#fff" stroke-width="1.8" fill="none"/></svg><div style="position:absolute;left:1186px;top:278px;font-size:12.6px;color:#222;white-space:nowrap;line-height:1;">Allowed</div><div style="position:absolute;left:1449px;top:278px;font-size:12.6px;color:#9a9a9a;white-space:nowrap;line-height:1;">-- Unlicensed --</div><svg style="position:absolute;left:365px;top:274px" width="15" height="17" viewBox="0 0 15 17"><rect x="1" y="3" width="13" height="13" rx="1.5" fill="#2c7fd0" stroke="#9cc3ea" stroke-width="1"/><rect x="5.5" y="0.5" width="4" height="3" fill="#2c7fd0"/><circle cx="7.5" cy="8" r="2.4" fill="#fff"/><rect x="4" y="11.5" width="7" height="2.5" fill="#fff"/></svg><div style="position:absolute;left:386px;top:273px;width:14px;height:17px;background:#fff"></div><svg style="position:absolute;left:384px;top:272px" width="18" height="19" viewBox="0 0 18 19"><path d="M3 17 L5 12 L15 2 L17 4 L7 14 Z" fill="#777"/><path d="M3 17 L5 12 L7 14Z" fill="#444"/></svg><div style="position:absolute;left:384px;top:296px;width:144px;height:28px;background:#d9fbd9"></div><div style="position:absolute;left:1024px;top:296px;width:24px;height:28px;background:#d4d4d4"></div><div style="position:absolute;left:1048px;top:296px;width:120px;height:28px;background:#d9fbd9"></div><div style="position:absolute;left:344px;top:296px;width:1320px;height:1px;background:rgba(255,255,255,0.6)"></div><div style="position:absolute;left:363px;top:296px;width:1px;height:28px;background:rgba(255,255,255,0.6)"></div><div style="position:absolute;left:384px;top:296px;width:1px;height:28px;background:rgba(255,255,255,0.6)"></div><div style="position:absolute;left:528px;top:296px;width:1px;height:28px;background:rgba(255,255,255,0.6)"></div><div style="position:absolute;left:704px;top:296px;width:1px;height:28px;background:rgba(255,255,255,0.6)"></div><div style="position:absolute;left:960px;top:296px;width:1px;height:28px;background:rgba(255,255,255,0.6)"></div><div style="position:absolute;left:1024px;top:296px;width:1px;height:28px;background:rgba(255,255,255,0.6)"></div><div style="position:absolute;left:1048px;top:296px;width:1px;height:28px;background:rgba(255,255,255,0.6)"></div><div style="position:absolute;left:1168px;top:296px;width:1px;height:28px;background:rgba(255,255,255,0.6)"></div><div style="position:absolute;left:1264px;top:296px;width:1px;height:28px;background:rgba(255,255,255,0.6)"></div><div style="position:absolute;left:1392px;top:296px;width:1px;height:28px;background:rgba(255,255,255,0.6)"></div><div style="position:absolute;left:1448px;top:296px;width:1px;height:28px;background:rgba(255,255,255,0.6)"></div><div style="position:absolute;left:1600px;top:296px;width:1px;height:28px;background:rgba(255,255,255,0.6)"></div><div style="position:absolute;left:1664px;top:296px;width:1px;height:28px;background:rgba(255,255,255,0.6)"></div><div style="position:absolute;left:401px;top:306px;font-size:12.6px;color:#222;white-space:nowrap;line-height:1;">Edited</div><div style="position:absolute;left:529px;top:306px;font-size:12.6px;color:#222;white-space:nowrap;line-height:1;">Allan Deyoung</div><div style="position:absolute;left:705px;top:306px;font-size:12.6px;color:#222;white-space:nowrap;line-height:1;width:254px;overflow:hidden">AllanD@M365x88704954.OnMicrosoft.com</div><div style="position:absolute;left:961px;top:306px;font-size:12.6px;color:#222;white-space:nowrap;line-height:1;">Member</div><div style="position:absolute;left:1049px;top:306px;font-size:12.6px;color:#222;white-space:nowrap;line-height:1;">Research</div><div style="position:absolute;left:1170px;top:303px;width:14px;height:14px;background:#2e9a5e;border-radius:50%;box-shadow:0 0 0 1px #9bc9ad"></div><svg style="position:absolute;left:1170px;top:303px" width="14" height="14" viewBox="0 0 14 14"><path d="M3.5 7.2 L6 9.6 L10.6 4.6" stroke="#fff" stroke-width="1.8" fill="none"/></svg><div style="position:absolute;left:1186px;top:306px;font-size:12.6px;color:#222;white-space:nowrap;line-height:1;">Allowed</div><div style="position:absolute;left:1264px;top:306px;font-size:12.6px;color:#222;white-space:nowrap;line-height:1;width:126px;text-align:right">1/13/2025 11:48 PM</div><div style="position:absolute;left:1393px;top:306px;font-size:12.6px;color:#222;white-space:nowrap;line-height:1;">US</div><div style="position:absolute;left:1449px;top:304px;font-size:12.6px;color:#222;white-space:nowrap;line-height:1;width:150px;overflow:hidden;line-height:15px;height:17px">[2] Microsoft_Teams_Enterprise</div><div style="position:absolute;left:1601px;top:306px;font-size:12.6px;color:#222;white-space:nowrap;line-height:1;">[2]&#8709;;&#8709;</div><div style="position:absolute;left:345px;top:304px;width:14px;height:14px;border:2px solid #a8a8a8;border-radius:50%;background:#fff"></div><div style="position:absolute;left:349px;top:308px;width:6px;height:6px;background:#8c8c8c;border-radius:50%"></div><svg style="position:absolute;left:364px;top:302px" width="18" height="17" viewBox="0 0 18 17"><circle cx="9" cy="6" r="4.8" fill="#2c7fd0" stroke="#9cc3ea" stroke-width="1"/><path d="M1.5 16 Q2 11 6 10.6 L12 10.6 Q16 11 16.5 16 Z" fill="#2c7fd0" stroke="#9cc3ea" stroke-width="1"/></svg><div style="position:absolute;left:386px;top:301px;width:14px;height:17px;background:#fff"></div><svg style="position:absolute;left:384px;top:300px" width="18" height="19" viewBox="0 0 18 19"><path d="M3 17 L5 12 L15 2 L17 4 L7 14 Z" fill="#777"/><path d="M3 17 L5 12 L7 14Z" fill="#444"/></svg><div style="position:absolute;left:324px;top:324px;width:1340px;height:28px;background:#0a70d8"></div><div style="position:absolute;left:324px;top:324px;width:20px;height:28px;background:#fff"></div><div style="position:absolute;left:384px;top:324px;width:144px;height:28px;background:#6db3dc"></div><div style="position:absolute;left:1024px;top:324px;width:24px;height:28px;background:#6ea6d9"></div><div style="position:absolute;left:1048px;top:324px;width:120px;height:28px;background:#6db3dc"></div><div style="position:absolute;left:1264px;top:324px;width:128px;height:28px;background:#6ea6d9"></div><div style="position:absolute;left:1448px;top:324px;width:216px;height:28px;background:#6ea6d9"></div><div style="position:absolute;left:344px;top:324px;width:1320px;height:1px;background:rgba(255,255,255,0.35)"></div><div style="position:absolute;left:363px;top:324px;width:1px;height:28px;background:rgba(255,255,255,0.35)"></div><div style="position:absolute;left:384px;top:324px;width:1px;height:28px;background:rgba(255,255,255,0.35)"></div><div style="position:absolute;left:528px;top:324px;width:1px;height:28px;background:rgba(255,255,255,0.35)"></div><div style="position:absolute;left:704px;top:324px;width:1px;height:28px;background:rgba(255,255,255,0.35)"></div><div style="position:absolute;left:960px;top:324px;width:1px;height:28px;background:rgba(255,255,255,0.35)"></div><div style="position:absolute;left:1024px;top:324px;width:1px;height:28px;background:rgba(255,255,255,0.35)"></div><div style="position:absolute;left:1048px;top:324px;width:1px;height:28px;background:rgba(255,255,255,0.35)"></div><div style="position:absolute;left:1168px;top:324px;width:1px;height:28px;background:rgba(255,255,255,0.35)"></div><div style="position:absolute;left:1264px;top:324px;width:1px;height:28px;background:rgba(255,255,255,0.35)"></div><div style="position:absolute;left:1392px;top:324px;width:1px;height:28px;background:rgba(255,255,255,0.35)"></div><div style="position:absolute;left:1448px;top:324px;width:1px;height:28px;background:rgba(255,255,255,0.35)"></div><div style="position:absolute;left:1600px;top:324px;width:1px;height:28px;background:rgba(255,255,255,0.35)"></div><div style="position:absolute;left:1664px;top:324px;width:1px;height:28px;background:rgba(255,255,255,0.35)"></div><div style="position:absolute;left:401px;top:334px;font-size:12.6px;color:#fff;white-space:nowrap;line-height:1;">Edited</div><div style="position:absolute;left:529px;top:334px;font-size:12.6px;color:#fff;white-space:nowrap;line-height:1;">Bianca Pisani</div><div style="position:absolute;left:705px;top:334px;font-size:12.6px;color:#fff;white-space:nowrap;line-height:1;width:254px;overflow:hidden">BiancaP@M365x88704954.OnMicrosoft.com</div><div style="position:absolute;left:961px;top:334px;font-size:12.6px;color:#fff;white-space:nowrap;line-height:1;">Member</div><div style="position:absolute;left:1049px;top:334px;font-size:12.6px;color:#fff;white-space:nowrap;line-height:1;">HR</div><div style="position:absolute;left:1170px;top:331px;width:14px;height:14px;background:#2e9a5e;border-radius:50%;box-shadow:0 0 0 1px #9bc9ad"></div><svg style="position:absolute;left:1170px;top:331px" width="14" height="14" viewBox="0 0 14 14"><path d="M3.5 7.2 L6 9.6 L10.6 4.6" stroke="#fff" stroke-width="1.8" fill="none"/></svg><div style="position:absolute;left:1186px;top:334px;font-size:12.6px;color:#fff;white-space:nowrap;line-height:1;">Allowed</div><div style="position:absolute;left:1393px;top:334px;font-size:12.6px;color:#fff;white-space:nowrap;line-height:1;">US</div><div style="position:absolute;left:1449px;top:334px;font-size:12.6px;color:#a0b4c8;white-space:nowrap;line-height:1;">-- Unlicensed --</div><svg style="position:absolute;left:364px;top:330px" width="18" height="17" viewBox="0 0 18 17"><circle cx="9" cy="6" r="4.6" fill="none" stroke="#cfe6ff" stroke-width="1.2"/><path d="M1.5 15.5 Q2 11 6 10.5 L12 10.5 Q16 11 16.5 15.5 Z" fill="none" stroke="#cfe6ff" stroke-width="1.2"/></svg><div style="position:absolute;left:386px;top:329px;width:14px;height:17px;background:#fff"></div><svg style="position:absolute;left:384px;top:328px" width="18" height="19" viewBox="0 0 18 19"><path d="M3 17 L5 12 L15 2 L17 4 L7 14 Z" fill="#777"/><path d="M3 17 L5 12 L7 14Z" fill="#444"/></svg><div style="position:absolute;left:324px;top:352px;width:1340px;height:28px;background:#0a70d8"></div><div style="position:absolute;left:324px;top:352px;width:20px;height:28px;background:#fff"></div><div style="position:absolute;left:384px;top:352px;width:144px;height:28px;background:#6db3dc"></div><div style="position:absolute;left:1024px;top:352px;width:24px;height:28px;background:#6ea6d9"></div><div style="position:absolute;left:1048px;top:352px;width:120px;height:28px;background:#6db3dc"></div><div style="position:absolute;left:1264px;top:352px;width:128px;height:28px;background:#6ea6d9"></div><div style="position:absolute;left:1392px;top:352px;width:56px;height:28px;background:#6ea6d9"></div><div style="position:absolute;left:1448px;top:352px;width:216px;height:28px;background:#6ea6d9"></div><div style="position:absolute;left:344px;top:352px;width:1320px;height:1px;background:rgba(255,255,255,0.35)"></div><div style="position:absolute;left:363px;top:352px;width:1px;height:28px;background:rgba(255,255,255,0.35)"></div><div style="position:absolute;left:384px;top:352px;width:1px;height:28px;background:rgba(255,255,255,0.35)"></div><div style="position:absolute;left:528px;top:352px;width:1px;height:28px;background:rgba(255,255,255,0.35)"></div><div style="position:absolute;left:704px;top:352px;width:1px;height:28px;background:rgba(255,255,255,0.35)"></div><div style="position:absolute;left:960px;top:352px;width:1px;height:28px;background:rgba(255,255,255,0.35)"></div><div style="position:absolute;left:1024px;top:352px;width:1px;height:28px;background:rgba(255,255,255,0.35)"></div><div style="position:absolute;left:1048px;top:352px;width:1px;height:28px;background:rgba(255,255,255,0.35)"></div><div style="position:absolute;left:1168px;top:352px;width:1px;height:28px;background:rgba(255,255,255,0.35)"></div><div style="position:absolute;left:1264px;top:352px;width:1px;height:28px;background:rgba(255,255,255,0.35)"></div><div style="position:absolute;left:1392px;top:352px;width:1px;height:28px;background:rgba(255,255,255,0.35)"></div><div style="position:absolute;left:1448px;top:352px;width:1px;height:28px;background:rgba(255,255,255,0.35)"></div><div style="position:absolute;left:1600px;top:352px;width:1px;height:28px;background:rgba(255,255,255,0.35)"></div><div style="position:absolute;left:1664px;top:352px;width:1px;height:28px;background:rgba(255,255,255,0.35)"></div><div style="position:absolute;left:401px;top:362px;font-size:12.6px;color:#fff;white-space:nowrap;line-height:1;">Edited</div><div style="position:absolute;left:529px;top:362px;font-size:12.6px;color:#fff;white-space:nowrap;line-height:1;">deyokev937</div><div style="position:absolute;left:705px;top:362px;font-size:12.6px;color:#fff;white-space:nowrap;line-height:1;width:254px;overflow:hidden">deyokev937_provko.com#EXT#@M365x8870</div><div style="position:absolute;left:961px;top:362px;font-size:12.6px;color:#fff;white-space:nowrap;line-height:1;">Guest</div><div style="position:absolute;left:1049px;top:362px;font-size:12.6px;color:#fff;white-space:nowrap;line-height:1;">Research</div><div style="position:absolute;left:1170px;top:359px;width:14px;height:14px;background:#2e9a5e;border-radius:50%;box-shadow:0 0 0 1px #9bc9ad"></div><svg style="position:absolute;left:1170px;top:359px" width="14" height="14" viewBox="0 0 14 14"><path d="M3.5 7.2 L6 9.6 L10.6 4.6" stroke="#fff" stroke-width="1.8" fill="none"/></svg><div style="position:absolute;left:1186px;top:362px;font-size:12.6px;color:#fff;white-space:nowrap;line-height:1;">Allowed</div><div style="position:absolute;left:1449px;top:362px;font-size:12.6px;color:#a0b4c8;white-space:nowrap;line-height:1;">-- Unlicensed --</div><svg style="position:absolute;left:365px;top:358px" width="15" height="17" viewBox="0 0 15 17"><rect x="1" y="3" width="13" height="13" rx="2" fill="none" stroke="#cfe6ff" stroke-width="1.2"/><rect x="5.5" y="1" width="4" height="3" fill="#cfe6ff"/><circle cx="7.5" cy="8" r="2.3" fill="#cfe6ff"/><rect x="4" y="11.5" width="7" height="2.3" fill="#cfe6ff"/></svg><div style="position:absolute;left:386px;top:357px;width:14px;height:17px;background:#fff"></div><svg style="position:absolute;left:384px;top:356px" width="18" height="19" viewBox="0 0 18 19"><path d="M3 17 L5 12 L15 2 L17 4 L7 14 Z" fill="#777"/><path d="M3 17 L5 12 L7 14Z" fill="#444"/></svg><div style="position:absolute;left:384px;top:380px;width:144px;height:28px;background:#d9fbd9"></div><div style="position:absolute;left:1024px;top:380px;width:24px;height:28px;background:#d4d4d4"></div><div style="position:absolute;left:1048px;top:380px;width:120px;height:28px;background:#d9fbd9"></div><div style="position:absolute;left:1264px;top:380px;width:128px;height:28px;background:#d4d4d4"></div><div style="position:absolute;left:1392px;top:380px;width:56px;height:28px;background:#d4d4d4"></div><div style="position:absolute;left:1448px;top:380px;width:216px;height:28px;background:#d4d4d4"></div><div style="position:absolute;left:344px;top:380px;width:1320px;height:1px;background:rgba(255,255,255,0.6)"></div><div style="position:absolute;left:363px;top:380px;width:1px;height:28px;background:rgba(255,255,255,0.6)"></div><div style="position:absolute;left:384px;top:380px;width:1px;height:28px;background:rgba(255,255,255,0.6)"></div><div style="position:absolute;left:528px;top:380px;width:1px;height:28px;background:rgba(255,255,255,0.6)"></div><div style="position:absolute;left:704px;top:380px;width:1px;height:28px;background:rgba(255,255,255,0.6)"></div><div style="position:absolute;left:960px;top:380px;width:1px;height:28px;background:rgba(255,255,255,0.6)"></div><div style="position:absolute;left:1024px;top:380px;width:1px;height:28px;background:rgba(255,255,255,0.6)"></div><div style="position:absolute;left:1048px;top:380px;width:1px;height:28px;background:rgba(255,255,255,0.6)"></div><div style="position:absolute;left:1168px;top:380px;width:1px;height:28px;background:rgba(255,255,255,0.6)"></div><div style="position:absolute;left:1264px;top:380px;width:1px;height:28px;background:rgba(255,255,255,0.6)"></div><div style="position:absolute;left:1392px;top:380px;width:1px;height:28px;background:rgba(255,255,255,0.6)"></div><div style="position:absolute;left:1448px;top:380px;width:1px;height:28px;background:rgba(255,255,255,0.6)"></div><div style="position:absolute;left:1600px;top:380px;width:1px;height:28px;background:rgba(255,255,255,0.6)"></div><div style="position:absolute;left:1664px;top:380px;width:1px;height:28px;background:rgba(255,255,255,0.6)"></div><div style="position:absolute;left:401px;top:390px;font-size:12.6px;color:#222;white-space:nowrap;line-height:1;">Edited</div><div style="position:absolute;left:529px;top:390px;font-size:12.6px;color:#222;white-space:nowrap;line-height:1;">Amorepead68</div><div style="position:absolute;left:705px;top:390px;font-size:12.6px;color:#222;white-space:nowrap;line-height:1;width:254px;overflow:hidden">Amorepead68_rhyta.com#EXT#@M365x887(</div><div style="position:absolute;left:961px;top:390px;font-size:12.6px;color:#222;white-space:nowrap;line-height:1;">Guest</div><div style="position:absolute;left:1049px;top:390px;font-size:12.6px;color:#222;white-space:nowrap;line-height:1;">Research</div><div style="position:absolute;left:1170px;top:387px;width:14px;height:14px;background:#2e9a5e;border-radius:50%;box-shadow:0 0 0 1px #9bc9ad"></div><svg style="position:absolute;left:1170px;top:387px" width="14" height="14" viewBox="0 0 14 14"><path d="M3.5 7.2 L6 9.6 L10.6 4.6" stroke="#fff" stroke-width="1.8" fill="none"/></svg><div style="position:absolute;left:1186px;top:390px;font-size:12.6px;color:#222;white-space:nowrap;line-height:1;">Allowed</div><div style="position:absolute;left:1449px;top:390px;font-size:12.6px;color:#9a9a9a;white-space:nowrap;line-height:1;">-- Unlicensed --</div><svg style="position:absolute;left:365px;top:386px" width="15" height="17" viewBox="0 0 15 17"><rect x="1" y="3" width="13" height="13" rx="1.5" fill="#2c7fd0" stroke="#9cc3ea" stroke-width="1"/><rect x="5.5" y="0.5" width="4" height="3" fill="#2c7fd0"/><circle cx="7.5" cy="8" r="2.4" fill="#fff"/><rect x="4" y="11.5" width="7" height="2.5" fill="#fff"/></svg><div style="position:absolute;left:386px;top:385px;width:14px;height:17px;background:#fff"></div><svg style="position:absolute;left:384px;top:384px" width="18" height="19" viewBox="0 0 18 19"><path d="M3 17 L5 12 L15 2 L17 4 L7 14 Z" fill="#777"/><path d="M3 17 L5 12 L7 14Z" fill="#444"/></svg><div style="position:absolute;left:331px;top:416px;width:11px;height:11px;background:linear-gradient(#f4f6fb,#d5dbea);border:1px solid #8d9ab5;border-radius:1px"></div><div style="position:absolute;left:334px;top:421px;width:5px;height:1px;background:#445"></div><div style="position:absolute;left:367px;top:418px;font-size:12.6px;color:#111;white-space:nowrap;line-height:1;font-weight:bold">Deleted (1)</div><svg style="position:absolute;left:347px;top:414px" width="14" height="16" viewBox="0 0 14 16"><rect x="1" y="2" width="12" height="2" fill="#666"/><rect x="5" y="0" width="4" height="2" fill="#666"/><rect x="2" y="5" width="10" height="11" fill="none" stroke="#666" stroke-width="1.6"/><rect x="5" y="6" width="1.4" height="9" fill="#666"/><rect x="8" y="6" width="1.4" height="9" fill="#666"/></svg><div style="position:absolute;left:324px;top:436px;width:1340px;height:28px;background:#0a70d8"></div><div style="position:absolute;left:324px;top:436px;width:20px;height:28px;background:#fff"></div><div style="position:absolute;left:384px;top:436px;width:144px;height:28px;background:#6db3dc"></div><div style="position:absolute;left:1024px;top:436px;width:24px;height:28px;background:#6ea6d9"></div><div style="position:absolute;left:1392px;top:436px;width:56px;height:28px;background:#6ea6d9"></div><div style="position:absolute;left:1448px;top:436px;width:216px;height:28px;background:#6ea6d9"></div><div style="position:absolute;left:344px;top:436px;width:1320px;height:1px;background:rgba(255,255,255,0.35)"></div><div style="position:absolute;left:363px;top:436px;width:1px;height:28px;background:rgba(255,255,255,0.35)"></div><div style="position:absolute;left:384px;top:436px;width:1px;height:28px;background:rgba(255,255,255,0.35)"></div><div style="position:absolute;left:528px;top:436px;width:1px;height:28px;background:rgba(255,255,255,0.35)"></div><div style="position:absolute;left:704px;top:436px;width:1px;height:28px;background:rgba(255,255,255,0.35)"></div><div style="position:absolute;left:960px;top:436px;width:1px;height:28px;background:rgba(255,255,255,0.35)"></div><div style="position:absolute;left:1024px;top:436px;width:1px;height:28px;background:rgba(255,255,255,0.35)"></div><div style="position:absolute;left:1048px;top:436px;width:1px;height:28px;background:rgba(255,255,255,0.35)"></div><div style="position:absolute;left:1168px;top:436px;width:1px;height:28px;background:rgba(255,255,255,0.35)"></div><div style="position:absolute;left:1264px;top:436px;width:1px;height:28px;background:rgba(255,255,255,0.35)"></div><div style="position:absolute;left:1392px;top:436px;width:1px;height:28px;background:rgba(255,255,255,0.35)"></div><div style="position:absolute;left:1448px;top:436px;width:1px;height:28px;background:rgba(255,255,255,0.35)"></div><div style="position:absolute;left:1600px;top:436px;width:1px;height:28px;background:rgba(255,255,255,0.35)"></div><div style="position:absolute;left:1664px;top:436px;width:1px;height:28px;background:rgba(255,255,255,0.35)"></div><div style="position:absolute;left:401px;top:446px;font-size:12.6px;color:#fff;white-space:nowrap;line-height:1;">Deleted</div><div style="position:absolute;left:529px;top:446px;font-size:12.6px;color:#fff;white-space:nowrap;line-height:1;">Don Pinkleben</div><div style="position:absolute;left:705px;top:446px;font-size:12.6px;color:#fff;white-space:nowrap;line-height:1;width:254px;overflow:hidden">DonP@M365x88704954.OnMicrosoft.com</div><div style="position:absolute;left:961px;top:446px;font-size:12.6px;color:#fff;white-space:nowrap;line-height:1;">Member</div><div style="position:absolute;left:1049px;top:446px;font-size:12.6px;color:#fff;white-space:nowrap;line-height:1;">HR</div><div style="position:absolute;left:1170px;top:443px;width:14px;height:14px;background:#2e9a5e;border-radius:50%;box-shadow:0 0 0 1px #9bc9ad"></div><svg style="position:absolute;left:1170px;top:443px" width="14" height="14" viewBox="0 0 14 14"><path d="M3.5 7.2 L6 9.6 L10.6 4.6" stroke="#fff" stroke-width="1.8" fill="none"/></svg><div style="position:absolute;left:1186px;top:446px;font-size:12.6px;color:#fff;white-space:nowrap;line-height:1;">Allowed</div><div style="position:absolute;left:1264px;top:446px;font-size:12.6px;color:#fff;white-space:nowrap;line-height:1;width:126px;text-align:right">3/19/2025 12:32 PM</div><div style="position:absolute;left:1449px;top:446px;font-size:12.6px;color:#a0b4c8;white-space:nowrap;line-height:1;">-- Unlicensed --</div><div style="position:absolute;left:345px;top:444px;width:14px;height:14px;border:2px solid #a8a8a8;border-radius:50%;background:#fff"></div><div style="position:absolute;left:349px;top:448px;width:6px;height:6px;background:#8c8c8c;border-radius:50%"></div><svg style="position:absolute;left:365px;top:442px" width="15" height="17" viewBox="0 0 15 17"><rect x="1" y="3" width="13" height="13" rx="2" fill="none" stroke="#cfe6ff" stroke-width="1.2"/><rect x="5.5" y="1" width="4" height="3" fill="#cfe6ff"/><circle cx="7.5" cy="8" r="2.3" fill="#cfe6ff"/><rect x="4" y="11.5" width="7" height="2.3" fill="#cfe6ff"/></svg><div style="position:absolute;left:386px;top:441px;width:14px;height:17px;background:#fff"></div><svg style="position:absolute;left:386px;top:442px" width="14" height="16" viewBox="0 0 14 16"><rect x="1" y="2" width="12" height="2" fill="#777"/><rect x="5" y="0" width="4" height="2" fill="#777"/><rect x="2" y="5" width="10" height="11" fill="none" stroke="#777" stroke-width="1.6"/><rect x="5" y="6" width="1.4" height="9" fill="#777"/><rect x="8" y="6" width="1.4" height="9" fill="#777"/></svg><div style="position:absolute;left:331px;top:472px;width:11px;height:11px;background:linear-gradient(#f4f6fb,#d5dbea);border:1px solid #8d9ab5;border-radius:1px"></div><div style="position:absolute;left:334px;top:477px;width:5px;height:1px;background:#445"></div><div style="position:absolute;left:349px;top:474px;font-size:12.6px;color:#111;white-space:nowrap;line-height:1;font-weight:bold">(51)</div><div style="position:absolute;left:1600px;top:474px;font-size:12.6px;color:#111;white-space:nowrap;line-height:1;font-weight:bold;width:62px;text-align:right">$0.00</div><div style="position:absolute;left:1024px;top:492px;width:24px;height:28px;background:#d4d4d4"></div><div style="position:absolute;left:1048px;top:492px;width:120px;height:28px;background:#d4d4d4"></div><div style="position:absolute;left:1264px;top:492px;width:128px;height:28px;background:#d4d4d4"></div><div style="position:absolute;left:1392px;top:492px;width:56px;height:28px;background:#d4d4d4"></div><div style="position:absolute;left:1448px;top:492px;width:216px;height:28px;background:#d4d4d4"></div><div style="position:absolute;left:344px;top:492px;width:1320px;height:1px;background:rgba(255,255,255,0.6)"></div><div style="position:absolute;left:363px;top:492px;width:1px;height:28px;background:rgba(255,255,255,0.6)"></div><div style="position:absolute;left:384px;top:492px;width:1px;height:28px;background:rgba(255,255,255,0.6)"></div><div style="position:absolute;left:528px;top:492px;width:1px;height:28px;background:rgba(255,255,255,0.6)"></div><div style="position:absolute;left:704px;top:492px;width:1px;height:28px;background:rgba(255,255,255,0.6)"></div><div style="position:absolute;left:960px;top:492px;width:1px;height:28px;background:rgba(255,255,255,0.6)"></div><div style="position:absolute;left:1024px;top:492px;width:1px;height:28px;background:rgba(255,255,255,0.6)"></div><div style="position:absolute;left:1048px;top:492px;width:1px;height:28px;background:rgba(255,255,255,0.6)"></div><div style="position:absolute;left:1168px;top:492px;width:1px;height:28px;background:rgba(255,255,255,0.6)"></div><div style="position:absolute;left:1264px;top:492px;width:1px;height:28px;background:rgba(255,255,255,0.6)"></div><div style="position:absolute;left:1392px;top:492px;width:1px;height:28px;background:rgba(255,255,255,0.6)"></div><div style="position:absolute;left:1448px;top:492px;width:1px;height:28px;background:rgba(255,255,255,0.6)"></div><div style="position:absolute;left:1600px;top:492px;width:1px;height:28px;background:rgba(255,255,255,0.6)"></div><div style="position:absolute;left:1664px;top:492px;width:1px;height:28px;background:rgba(255,255,255,0.6)"></div><div style="position:absolute;left:529px;top:502px;font-size:12.6px;color:#222;white-space:nowrap;line-height:1;">hoserax974</div><div style="position:absolute;left:705px;top:502px;font-size:12.6px;color:#222;white-space:nowrap;line-height:1;width:254px;overflow:hidden">hoserax974_xx.com#EXT#@M365x88704</div><div style="position:absolute;left:961px;top:502px;font-size:12.6px;color:#222;white-space:nowrap;line-height:1;">Guest</div><div style="position:absolute;left:1170px;top:499px;width:14px;height:14px;background:#2e9a5e;border-radius:50%;box-shadow:0 0 0 1px #9bc9ad"></div><svg style="position:absolute;left:1170px;top:499px" width="14" height="14" viewBox="0 0 14 14"><path d="M3.5 7.2 L6 9.6 L10.6 4.6" stroke="#fff" stroke-width="1.8" fill="none"/></svg><div style="position:absolute;left:1186px;top:502px;font-size:12.6px;color:#222;white-space:nowrap;line-height:1;">Allowed</div><div style="position:absolute;left:1449px;top:502px;font-size:12.6px;color:#9a9a9a;white-space:nowrap;line-height:1;">-- Unlicensed --</div><svg style="position:absolute;left:365px;top:498px" width="15" height="17" viewBox="0 0 15 17"><rect x="1" y="3" width="13" height="13" rx="1.5" fill="#2c7fd0" stroke="#9cc3ea" stroke-width="1"/><rect x="5.5" y="0.5" width="4" height="3" fill="#2c7fd0"/><circle cx="7.5" cy="8" r="2.4" fill="#fff"/><rect x="4" y="11.5" width="7" height="2.5" fill="#fff"/></svg><div style="position:absolute;left:1024px;top:520px;width:24px;height:28px;background:#d4d4d4"></div><div style="position:absolute;left:344px;top:520px;width:1320px;height:1px;background:rgba(255,255,255,0.6)"></div><div style="position:absolute;left:363px;top:520px;width:1px;height:28px;background:rgba(255,255,255,0.6)"></div><div style="position:absolute;left:384px;top:520px;width:1px;height:28px;background:rgba(255,255,255,0.6)"></div><div style="position:absolute;left:528px;top:520px;width:1px;height:28px;background:rgba(255,255,255,0.6)"></div><div style="position:absolute;left:704px;top:520px;width:1px;height:28px;background:rgba(255,255,255,0.6)"></div><div style="position:absolute;left:960px;top:520px;width:1px;height:28px;background:rgba(255,255,255,0.6)"></div><div style="position:absolute;left:1024px;top:520px;width:1px;height:28px;background:rgba(255,255,255,0.6)"></div><div style="position:absolute;left:1048px;top:520px;width:1px;height:28px;background:rgba(255,255,255,0.6)"></div><div style="position:absolute;left:1168px;top:520px;width:1px;height:28px;background:rgba(255,255,255,0.6)"></div><div style="position:absolute;left:1264px;top:520px;width:1px;height:28px;background:rgba(255,255,255,0.6)"></div><div style="position:absolute;left:1392px;top:520px;width:1px;height:28px;background:rgba(255,255,255,0.6)"></div><div style="position:absolute;left:1448px;top:520px;width:1px;height:28px;background:rgba(255,255,255,0.6)"></div><div style="position:absolute;left:1600px;top:520px;width:1px;height:28px;background:rgba(255,255,255,0.6)"></div><div style="position:absolute;left:1664px;top:520px;width:1px;height:28px;background:rgba(255,255,255,0.6)"></div><div style="position:absolute;left:529px;top:530px;font-size:12.6px;color:#222;white-space:nowrap;line-height:1;">Lee Gu</div><div style="position:absolute;left:705px;top:530px;font-size:12.6px;color:#222;white-space:nowrap;line-height:1;width:254px;overflow:hidden">LeeG@M365x88704954.OnMicrosoft.com</div><div style="position:absolute;left:961px;top:530px;font-size:12.6px;color:#222;white-space:nowrap;line-height:1;">Member</div><div style="position:absolute;left:1049px;top:530px;font-size:12.6px;color:#222;white-space:nowrap;line-height:1;">Customer Support</div><div style="position:absolute;left:1170px;top:527px;width:14px;height:14px;background:#2e9a5e;border-radius:50%;box-shadow:0 0 0 1px #9bc9ad"></div><svg style="position:absolute;left:1170px;top:527px" width="14" height="14" viewBox="0 0 14 14"><path d="M3.5 7.2 L6 9.6 L10.6 4.6" stroke="#fff" stroke-width="1.8" fill="none"/></svg><div style="position:absolute;left:1186px;top:530px;font-size:12.6px;color:#222;white-space:nowrap;line-height:1;">Allowed</div><div style="position:absolute;left:1264px;top:530px;font-size:12.6px;color:#222;white-space:nowrap;line-height:1;width:126px;text-align:right">1/13/2025 11:51 PM</div><div style="position:absolute;left:1393px;top:530px;font-size:12.6px;color:#222;white-space:nowrap;line-height:1;">US</div><div style="position:absolute;left:1449px;top:528px;font-size:12.6px;color:#222;white-space:nowrap;line-height:1;width:150px;overflow:hidden;line-height:15px;height:17px">[2] Microsoft_Teams_Enterprise</div><div style="position:absolute;left:1601px;top:530px;font-size:12.6px;color:#222;white-space:nowrap;line-height:1;">[2]&#8709;;&#8709;</div><div style="position:absolute;left:345px;top:528px;width:14px;height:14px;border:2px solid #a8a8a8;border-radius:50%;background:#fff"></div><div style="position:absolute;left:349px;top:532px;width:6px;height:6px;background:#8c8c8c;border-radius:50%"></div><svg style="position:absolute;left:364px;top:526px" width="18" height="17" viewBox="0 0 18 17"><circle cx="9" cy="6" r="4.8" fill="#2c7fd0" stroke="#9cc3ea" stroke-width="1"/><path d="M1.5 16 Q2 11 6 10.6 L12 10.6 Q16 11 16.5 16 Z" fill="#2c7fd0" stroke="#9cc3ea" stroke-width="1"/></svg><div style="position:absolute;left:1024px;top:548px;width:24px;height:28px;background:#d4d4d4"></div><div style="position:absolute;left:1264px;top:548px;width:128px;height:28px;background:#d4d4d4"></div><div style="position:absolute;left:1448px;top:548px;width:216px;height:28px;background:#d4d4d4"></div><div style="position:absolute;left:344px;top:548px;width:1320px;height:1px;background:rgba(255,255,255,0.6)"></div><div style="position:absolute;left:363px;top:548px;width:1px;height:28px;background:rgba(255,255,255,0.6)"></div><div style="position:absolute;left:384px;top:548px;width:1px;height:28px;background:rgba(255,255,255,0.6)"></div><div style="position:absolute;left:528px;top:548px;width:1px;height:28px;background:rgba(255,255,255,0.6)"></div><div style="position:absolute;left:704px;top:548px;width:1px;height:28px;background:rgba(255,255,255,0.6)"></div><div style="position:absolute;left:960px;top:548px;width:1px;height:28px;background:rgba(255,255,255,0.6)"></div><div style="position:absolute;left:1024px;top:548px;width:1px;height:28px;background:rgba(255,255,255,0.6)"></div><div style="position:absolute;left:1048px;top:548px;width:1px;height:28px;background:rgba(255,255,255,0.6)"></div><div style="position:absolute;left:1168px;top:548px;width:1px;height:28px;background:rgba(255,255,255,0.6)"></div><div style="position:absolute;left:1264px;top:548px;width:1px;height:28px;background:rgba(255,255,255,0.6)"></div><div style="position:absolute;left:1392px;top:548px;width:1px;height:28px;background:rgba(255,255,255,0.6)"></div><div style="position:absolute;left:1448px;top:548px;width:1px;height:28px;background:rgba(255,255,255,0.6)"></div><div style="position:absolute;left:1600px;top:548px;width:1px;height:28px;background:rgba(255,255,255,0.6)"></div><div style="position:absolute;left:1664px;top:548px;width:1px;height:28px;background:rgba(255,255,255,0.6)"></div><div style="position:absolute;left:529px;top:558px;font-size:12.6px;color:#222;white-space:nowrap;line-height:1;">Raul Razo</div><div style="position:absolute;left:705px;top:558px;font-size:12.6px;color:#222;white-space:nowrap;line-height:1;width:254px;overflow:hidden">RaulR@M365x88704954.OnMicrosoft.com</div><div style="position:absolute;left:961px;top:558px;font-size:12.6px;color:#222;white-space:nowrap;line-height:1;">Member</div><div style="position:absolute;left:1049px;top:558px;font-size:12.6px;color:#222;white-space:nowrap;line-height:1;">HR</div><div style="position:absolute;left:1170px;top:555px;width:14px;height:14px;background:#d2492f;border-radius:50%;box-shadow:0 0 0 1px #e6a094"></div><div style="position:absolute;left:1173px;top:561px;width:8px;height:2px;background:#fff"></div><div style="position:absolute;left:1186px;top:558px;font-size:12.6px;color:#222;white-space:nowrap;line-height:1;">Blocked</div><div style="position:absolute;left:1393px;top:558px;font-size:12.6px;color:#222;white-space:nowrap;line-height:1;">US</div><div style="position:absolute;left:1449px;top:558px;font-size:12.6px;color:#9a9a9a;white-space:nowrap;line-height:1;">-- Unlicensed --</div><svg style="position:absolute;left:364px;top:554px" width="18" height="17" viewBox="0 0 18 17"><circle cx="9" cy="6" r="4.8" fill="#2c7fd0" stroke="#9cc3ea" stroke-width="1"/><path d="M1.5 16 Q2 11 6 10.6 L12 10.6 Q16 11 16.5 16 Z" fill="#2c7fd0" stroke="#9cc3ea" stroke-width="1"/></svg><div style="position:absolute;left:1024px;top:576px;width:24px;height:28px;background:#d4d4d4"></div><div style="position:absolute;left:344px;top:576px;width:1320px;height:1px;background:rgba(255,255,255,0.6)"></div><div style="position:absolute;left:363px;top:576px;width:1px;height:28px;background:rgba(255,255,255,0.6)"></div><div style="position:absolute;left:384px;top:576px;width:1px;height:28px;background:rgba(255,255,255,0.6)"></div><div style="position:absolute;left:528px;top:576px;width:1px;height:28px;background:rgba(255,255,255,0.6)"></div><div style="position:absolute;left:704px;top:576px;width:1px;height:28px;background:rgba(255,255,255,0.6)"></div><div style="position:absolute;left:960px;top:576px;width:1px;height:28px;background:rgba(255,255,255,0.6)"></div><div style="position:absolute;left:1024px;top:576px;width:1px;height:28px;background:rgba(255,255,255,0.6)"></div><div style="position:absolute;left:1048px;top:576px;width:1px;height:28px;background:rgba(255,255,255,0.6)"></div><div style="position:absolute;left:1168px;top:576px;width:1px;height:28px;background:rgba(255,255,255,0.6)"></div><div style="position:absolute;left:1264px;top:576px;width:1px;height:28px;background:rgba(255,255,255,0.6)"></div><div style="position:absolute;left:1392px;top:576px;width:1px;height:28px;background:rgba(255,255,255,0.6)"></div><div style="position:absolute;left:1448px;top:576px;width:1px;height:28px;background:rgba(255,255,255,0.6)"></div><div style="position:absolute;left:1600px;top:576px;width:1px;height:28px;background:rgba(255,255,255,0.6)"></div><div style="position:absolute;left:1664px;top:576px;width:1px;height:28px;background:rgba(255,255,255,0.6)"></div><div style="position:absolute;left:529px;top:586px;font-size:12.6px;color:#222;white-space:nowrap;line-height:1;">Megan Bowen</div><div style="position:absolute;left:705px;top:586px;font-size:12.6px;color:#222;white-space:nowrap;line-height:1;width:254px;overflow:hidden">MeganB@M365x88704954.OnMicrosoft.com</div><div style="position:absolute;left:961px;top:586px;font-size:12.6px;color:#222;white-space:nowrap;line-height:1;">Member</div><div style="position:absolute;left:1049px;top:586px;font-size:12.6px;color:#222;white-space:nowrap;line-height:1;">Marketing</div><div style="position:absolute;left:1170px;top:583px;width:14px;height:14px;background:#2e9a5e;border-radius:50%;box-shadow:0 0 0 1px #9bc9ad"></div><svg style="position:absolute;left:1170px;top:583px" width="14" height="14" viewBox="0 0 14 14"><path d="M3.5 7.2 L6 9.6 L10.6 4.6" stroke="#fff" stroke-width="1.8" fill="none"/></svg><div style="position:absolute;left:1186px;top:586px;font-size:12.6px;color:#222;white-space:nowrap;line-height:1;">Allowed</div><div style="position:absolute;left:1264px;top:586px;font-size:12.6px;color:#222;white-space:nowrap;line-height:1;width:126px;text-align:right">1/14/2025 12:46 AM</div><div style="position:absolute;left:1393px;top:586px;font-size:12.6px;color:#222;white-space:nowrap;line-height:1;">US</div><div style="position:absolute;left:1449px;top:584px;font-size:12.6px;color:#222;white-space:nowrap;line-height:1;width:150px;overflow:hidden;line-height:15px;height:17px">[2] Microsoft_Teams_Enterprise</div><div style="position:absolute;left:1601px;top:586px;font-size:12.6px;color:#222;white-space:nowrap;line-height:1;">[2]&#8709;;&#8709;</div><div style="position:absolute;left:345px;top:584px;width:14px;height:14px;border:2px solid #a8a8a8;border-radius:50%;background:#fff"></div><div style="position:absolute;left:349px;top:588px;width:6px;height:6px;background:#8c8c8c;border-radius:50%"></div><svg style="position:absolute;left:364px;top:582px" width="18" height="17" viewBox="0 0 18 17"><circle cx="9" cy="6" r="4.8" fill="#2c7fd0" stroke="#9cc3ea" stroke-width="1"/><path d="M1.5 16 Q2 11 6 10.6 L12 10.6 Q16 11 16.5 16 Z" fill="#2c7fd0" stroke="#9cc3ea" stroke-width="1"/></svg><div style="position:absolute;left:1024px;top:604px;width:24px;height:28px;background:#d4d4d4"></div><div style="position:absolute;left:344px;top:604px;width:1320px;height:1px;background:rgba(255,255,255,0.6)"></div><div style="position:absolute;left:363px;top:604px;width:1px;height:28px;background:rgba(255,255,255,0.6)"></div><div style="position:absolute;left:384px;top:604px;width:1px;height:28px;background:rgba(255,255,255,0.6)"></div><div style="position:absolute;left:528px;top:604px;width:1px;height:28px;background:rgba(255,255,255,0.6)"></div><div style="position:absolute;left:704px;top:604px;width:1px;height:28px;background:rgba(255,255,255,0.6)"></div><div style="position:absolute;left:960px;top:604px;width:1px;height:28px;background:rgba(255,255,255,0.6)"></div><div style="position:absolute;left:1024px;top:604px;width:1px;height:28px;background:rgba(255,255,255,0.6)"></div><div style="position:absolute;left:1048px;top:604px;width:1px;height:28px;background:rgba(255,255,255,0.6)"></div><div style="position:absolute;left:1168px;top:604px;width:1px;height:28px;background:rgba(255,255,255,0.6)"></div><div style="position:absolute;left:1264px;top:604px;width:1px;height:28px;background:rgba(255,255,255,0.6)"></div><div style="position:absolute;left:1392px;top:604px;width:1px;height:28px;background:rgba(255,255,255,0.6)"></div><div style="position:absolute;left:1448px;top:604px;width:1px;height:28px;background:rgba(255,255,255,0.6)"></div><div style="position:absolute;left:1600px;top:604px;width:1px;height:28px;background:rgba(255,255,255,0.6)"></div><div style="position:absolute;left:1664px;top:604px;width:1px;height:28px;background:rgba(255,255,255,0.6)"></div><div style="position:absolute;left:529px;top:614px;font-size:12.6px;color:#222;white-space:nowrap;line-height:1;">Lidia Holloway</div><div style="position:absolute;left:705px;top:614px;font-size:12.6px;color:#222;white-space:nowrap;line-height:1;width:254px;overflow:hidden">LidiaH@M365x88704954.OnMicrosoft.com</div><div style="position:absolute;left:961px;top:614px;font-size:12.6px;color:#222;white-space:nowrap;line-height:1;">Member</div><div style="position:absolute;left:1049px;top:614px;font-size:12.6px;color:#222;white-space:nowrap;line-height:1;">Finance</div><div style="position:absolute;left:1170px;top:611px;width:14px;height:14px;background:#d2492f;border-radius:50%;box-shadow:0 0 0 1px #e6a094"></div><div style="position:absolute;left:1173px;top:617px;width:8px;height:2px;background:#fff"></div><div style="position:absolute;left:1186px;top:614px;font-size:12.6px;color:#222;white-space:nowrap;line-height:1;">Blocked</div><div style="position:absolute;left:1264px;top:614px;font-size:12.6px;color:#222;white-space:nowrap;line-height:1;width:126px;text-align:right">1/13/2025 11:51 PM</div><div style="position:absolute;left:1393px;top:614px;font-size:12.6px;color:#222;white-space:nowrap;line-height:1;">US</div><div style="position:absolute;left:1449px;top:612px;font-size:12.6px;color:#222;white-space:nowrap;line-height:1;width:150px;overflow:hidden;line-height:15px;height:17px">[2] Microsoft_Teams_Enterprise</div><div style="position:absolute;left:1601px;top:614px;font-size:12.6px;color:#222;white-space:nowrap;line-height:1;">[2]&#8709;;&#8709;</div><div style="position:absolute;left:345px;top:612px;width:14px;height:14px;border:2px solid #a8a8a8;border-radius:50%;background:#fff"></div><div style="position:absolute;left:349px;top:616px;width:6px;height:6px;background:#8c8c8c;border-radius:50%"></div><svg style="position:absolute;left:364px;top:610px" width="18" height="17" viewBox="0 0 18 17"><circle cx="9" cy="6" r="4.8" fill="#2c7fd0" stroke="#9cc3ea" stroke-width="1"/><path d="M1.5 16 Q2 11 6 10.6 L12 10.6 Q16 11 16.5 16 Z" fill="#2c7fd0" stroke="#9cc3ea" stroke-width="1"/></svg><div style="position:absolute;left:1024px;top:632px;width:24px;height:28px;background:#d4d4d4"></div><div style="position:absolute;left:344px;top:632px;width:1320px;height:1px;background:rgba(255,255,255,0.6)"></div><div style="position:absolute;left:363px;top:632px;width:1px;height:28px;background:rgba(255,255,255,0.6)"></div><div style="position:absolute;left:384px;top:632px;width:1px;height:28px;background:rgba(255,255,255,0.6)"></div><div style="position:absolute;left:528px;top:632px;width:1px;height:28px;background:rgba(255,255,255,0.6)"></div><div style="position:absolute;left:704px;top:632px;width:1px;height:28px;background:rgba(255,255,255,0.6)"></div><div style="position:absolute;left:960px;top:632px;width:1px;height:28px;background:rgba(255,255,255,0.6)"></div><div style="position:absolute;left:1024px;top:632px;width:1px;height:28px;background:rgba(255,255,255,0.6)"></div><div style="position:absolute;left:1048px;top:632px;width:1px;height:28px;background:rgba(255,255,255,0.6)"></div><div style="position:absolute;left:1168px;top:632px;width:1px;height:28px;background:rgba(255,255,255,0.6)"></div><div style="position:absolute;left:1264px;top:632px;width:1px;height:28px;background:rgba(255,255,255,0.6)"></div><div style="position:absolute;left:1392px;top:632px;width:1px;height:28px;background:rgba(255,255,255,0.6)"></div><div style="position:absolute;left:1448px;top:632px;width:1px;height:28px;background:rgba(255,255,255,0.6)"></div><div style="position:absolute;left:1600px;top:632px;width:1px;height:28px;background:rgba(255,255,255,0.6)"></div><div style="position:absolute;left:1664px;top:632px;width:1px;height:28px;background:rgba(255,255,255,0.6)"></div><div style="position:absolute;left:529px;top:642px;font-size:12.6px;color:#222;white-space:nowrap;line-height:1;">MOD Administrator</div><div style="position:absolute;left:705px;top:642px;font-size:12.6px;color:#222;white-space:nowrap;line-height:1;width:254px;overflow:hidden">admin@M365x88704954.onmicrosoft.com</div><div style="position:absolute;left:961px;top:642px;font-size:12.6px;color:#222;white-space:nowrap;line-height:1;">Member</div><div style="position:absolute;left:1049px;top:642px;font-size:12.6px;color:#222;white-space:nowrap;line-height:1;">Marketing</div><div style="position:absolute;left:1170px;top:639px;width:14px;height:14px;background:#2e9a5e;border-radius:50%;box-shadow:0 0 0 1px #9bc9ad"></div><svg style="position:absolute;left:1170px;top:639px" width="14" height="14" viewBox="0 0 14 14"><path d="M3.5 7.2 L6 9.6 L10.6 4.6" stroke="#fff" stroke-width="1.8" fill="none"/></svg><div style="position:absolute;left:1186px;top:642px;font-size:12.6px;color:#222;white-space:nowrap;line-height:1;">Allowed</div><div style="position:absolute;left:1264px;top:642px;font-size:12.6px;color:#222;white-space:nowrap;line-height:1;width:126px;text-align:right">6/17/2025 01:26 PM</div><div style="position:absolute;left:1393px;top:642px;font-size:12.6px;color:#222;white-space:nowrap;line-height:1;">US</div><div style="position:absolute;left:1449px;top:640px;font-size:12.6px;color:#222;white-space:nowrap;line-height:1;width:150px;overflow:hidden;line-height:15px;height:17px">[3] Microsoft Power Automate</div><div style="position:absolute;left:1601px;top:642px;font-size:12.6px;color:#222;white-space:nowrap;line-height:1;">[3]&#8709;;&#8709;;&#8709;</div><div style="position:absolute;left:345px;top:640px;width:14px;height:14px;border:2px solid #a8a8a8;border-radius:50%;background:#fff"></div><div style="position:absolute;left:349px;top:644px;width:6px;height:6px;background:#8c8c8c;border-radius:50%"></div><svg style="position:absolute;left:364px;top:638px" width="18" height="17" viewBox="0 0 18 17"><circle cx="9" cy="6" r="4.8" fill="#2c7fd0" stroke="#9cc3ea" stroke-width="1"/><path d="M1.5 16 Q2 11 6 10.6 L12 10.6 Q16 11 16.5 16 Z" fill="#2c7fd0" stroke="#9cc3ea" stroke-width="1"/></svg><div style="position:absolute;left:1024px;top:660px;width:24px;height:28px;background:#d4d4d4"></div><div style="position:absolute;left:344px;top:660px;width:1320px;height:1px;background:rgba(255,255,255,0.6)"></div><div style="position:absolute;left:363px;top:660px;width:1px;height:28px;background:rgba(255,255,255,0.6)"></div><div style="position:absolute;left:384px;top:660px;width:1px;height:28px;background:rgba(255,255,255,0.6)"></div><div style="position:absolute;left:528px;top:660px;width:1px;height:28px;background:rgba(255,255,255,0.6)"></div><div style="position:absolute;left:704px;top:660px;width:1px;height:28px;background:rgba(255,255,255,0.6)"></div><div style="position:absolute;left:960px;top:660px;width:1px;height:28px;background:rgba(255,255,255,0.6)"></div><div style="position:absolute;left:1024px;top:660px;width:1px;height:28px;background:rgba(255,255,255,0.6)"></div><div style="position:absolute;left:1048px;top:660px;width:1px;height:28px;background:rgba(255,255,255,0.6)"></div><div style="position:absolute;left:1168px;top:660px;width:1px;height:28px;background:rgba(255,255,255,0.6)"></div><div style="position:absolute;left:1264px;top:660px;width:1px;height:28px;background:rgba(255,255,255,0.6)"></div><div style="position:absolute;left:1392px;top:660px;width:1px;height:28px;background:rgba(255,255,255,0.6)"></div><div style="position:absolute;left:1448px;top:660px;width:1px;height:28px;background:rgba(255,255,255,0.6)"></div><div style="position:absolute;left:1600px;top:660px;width:1px;height:28px;background:rgba(255,255,255,0.6)"></div><div style="position:absolute;left:1664px;top:660px;width:1px;height:28px;background:rgba(255,255,255,0.6)"></div><div style="position:absolute;left:529px;top:670px;font-size:12.6px;color:#222;white-space:nowrap;line-height:1;">Adele Vance</div><div style="position:absolute;left:705px;top:670px;font-size:12.6px;color:#222;white-space:nowrap;line-height:1;width:254px;overflow:hidden">AdeleV@M365x88704954.OnMicrosoft.com</div><div style="position:absolute;left:961px;top:670px;font-size:12.6px;color:#222;white-space:nowrap;line-height:1;">Member</div><div style="position:absolute;left:1049px;top:670px;font-size:12.6px;color:#222;white-space:nowrap;line-height:1;">Finance</div><div style="position:absolute;left:1170px;top:667px;width:14px;height:14px;background:#2e9a5e;border-radius:50%;box-shadow:0 0 0 1px #9bc9ad"></div><svg style="position:absolute;left:1170px;top:667px" width="14" height="14" viewBox="0 0 14 14"><path d="M3.5 7.2 L6 9.6 L10.6 4.6" stroke="#fff" stroke-width="1.8" fill="none"/></svg><div style="position:absolute;left:1186px;top:670px;font-size:12.6px;color:#222;white-space:nowrap;line-height:1;">Allowed</div><div style="position:absolute;left:1264px;top:670px;font-size:12.6px;color:#222;white-space:nowrap;line-height:1;width:126px;text-align:right">1/13/2025 11:48 PM</div><div style="position:absolute;left:1393px;top:670px;font-size:12.6px;color:#222;white-space:nowrap;line-height:1;">US</div><div style="position:absolute;left:1449px;top:668px;font-size:12.6px;color:#222;white-space:nowrap;line-height:1;width:150px;overflow:hidden;line-height:15px;height:17px">[2] Microsoft_Teams_Enterprise</div><div style="position:absolute;left:1601px;top:670px;font-size:12.6px;color:#222;white-space:nowrap;line-height:1;">[2]&#8709;;&#8709;</div><div style="position:absolute;left:345px;top:668px;width:14px;height:14px;border:2px solid #a8a8a8;border-radius:50%;background:#fff"></div><div style="position:absolute;left:349px;top:672px;width:6px;height:6px;background:#8c8c8c;border-radius:50%"></div><svg style="position:absolute;left:364px;top:666px" width="18" height="17" viewBox="0 0 18 17"><circle cx="9" cy="6" r="4.8" fill="#2c7fd0" stroke="#9cc3ea" stroke-width="1"/><path d="M1.5 16 Q2 11 6 10.6 L12 10.6 Q16 11 16.5 16 Z" fill="#2c7fd0" stroke="#9cc3ea" stroke-width="1"/></svg><div style="position:absolute;left:1024px;top:688px;width:24px;height:28px;background:#d4d4d4"></div><div style="position:absolute;left:1048px;top:688px;width:120px;height:28px;background:#d4d4d4"></div><div style="position:absolute;left:1264px;top:688px;width:128px;height:28px;background:#d4d4d4"></div><div style="position:absolute;left:1392px;top:688px;width:56px;height:28px;background:#d4d4d4"></div><div style="position:absolute;left:1448px;top:688px;width:216px;height:28px;background:#d4d4d4"></div><div style="position:absolute;left:344px;top:688px;width:1320px;height:1px;background:rgba(255,255,255,0.6)"></div><div style="position:absolute;left:363px;top:688px;width:1px;height:28px;background:rgba(255,255,255,0.6)"></div><div style="position:absolute;left:384px;top:688px;width:1px;height:28px;background:rgba(255,255,255,0.6)"></div><div style="position:absolute;left:528px;top:688px;width:1px;height:28px;background:rgba(255,255,255,0.6)"></div><div style="position:absolute;left:704px;top:688px;width:1px;height:28px;background:rgba(255,255,255,0.6)"></div><div style="position:absolute;left:960px;top:688px;width:1px;height:28px;background:rgba(255,255,255,0.6)"></div><div style="position:absolute;left:1024px;top:688px;width:1px;height:28px;background:rgba(255,255,255,0.6)"></div><div style="position:absolute;left:1048px;top:688px;width:1px;height:28px;background:rgba(255,255,255,0.6)"></div><div style="position:absolute;left:1168px;top:688px;width:1px;height:28px;background:rgba(255,255,255,0.6)"></div><div style="position:absolute;left:1264px;top:688px;width:1px;height:28px;background:rgba(255,255,255,0.6)"></div><div style="position:absolute;left:1392px;top:688px;width:1px;height:28px;background:rgba(255,255,255,0.6)"></div><div style="position:absolute;left:1448px;top:688px;width:1px;height:28px;background:rgba(255,255,255,0.6)"></div><div style="position:absolute;left:1600px;top:688px;width:1px;height:28px;background:rgba(255,255,255,0.6)"></div><div style="position:absolute;left:1664px;top:688px;width:1px;height:28px;background:rgba(255,255,255,0.6)"></div><div style="position:absolute;left:529px;top:698px;font-size:12.6px;color:#222;white-space:nowrap;line-height:1;">sabad35587</div><div style="position:absolute;left:705px;top:698px;font-size:12.6px;color:#222;white-space:nowrap;line-height:1;width:254px;overflow:hidden">sabad35587_noroasis.com#EXT#@M365x887</div><div style="position:absolute;left:961px;top:698px;font-size:12.6px;color:#222;white-space:nowrap;line-height:1;">Guest</div><div style="position:absolute;left:1170px;top:695px;width:14px;height:14px;background:#d2492f;border-radius:50%;box-shadow:0 0 0 1px #e6a094"></div><div style="position:absolute;left:1173px;top:701px;width:8px;height:2px;background:#fff"></div><div style="position:absolute;left:1186px;top:698px;font-size:12.6px;color:#222;white-space:nowrap;line-height:1;">Blocked</div><div style="position:absolute;left:1449px;top:698px;font-size:12.6px;color:#9a9a9a;white-space:nowrap;line-height:1;">-- Unlicensed --</div><svg style="position:absolute;left:365px;top:694px" width="15" height="17" viewBox="0 0 15 17"><rect x="1" y="3" width="13" height="13" rx="1.5" fill="#2c7fd0" stroke="#9cc3ea" stroke-width="1"/><rect x="5.5" y="0.5" width="4" height="3" fill="#2c7fd0"/><circle cx="7.5" cy="8" r="2.4" fill="#fff"/><rect x="4" y="11.5" width="7" height="2.5" fill="#fff"/></svg><div style="position:absolute;left:1024px;top:716px;width:24px;height:28px;background:#d4d4d4"></div><div style="position:absolute;left:1048px;top:716px;width:120px;height:28px;background:#d4d4d4"></div><div style="position:absolute;left:1264px;top:716px;width:128px;height:28px;background:#d4d4d4"></div><div style="position:absolute;left:1392px;top:716px;width:56px;height:28px;background:#d4d4d4"></div><div style="position:absolute;left:1448px;top:716px;width:216px;height:28px;background:#d4d4d4"></div><div style="position:absolute;left:344px;top:716px;width:1320px;height:1px;background:rgba(255,255,255,0.6)"></div><div style="position:absolute;left:363px;top:716px;width:1px;height:28px;background:rgba(255,255,255,0.6)"></div><div style="position:absolute;left:384px;top:716px;width:1px;height:28px;background:rgba(255,255,255,0.6)"></div><div style="position:absolute;left:528px;top:716px;width:1px;height:28px;background:rgba(255,255,255,0.6)"></div><div style="position:absolute;left:704px;top:716px;width:1px;height:28px;background:rgba(255,255,255,0.6)"></div><div style="position:absolute;left:960px;top:716px;width:1px;height:28px;background:rgba(255,255,255,0.6)"></div><div style="position:absolute;left:1024px;top:716px;width:1px;height:28px;background:rgba(255,255,255,0.6)"></div><div style="position:absolute;left:1048px;top:716px;width:1px;height:28px;background:rgba(255,255,255,0.6)"></div><div style="position:absolute;left:1168px;top:716px;width:1px;height:28px;background:rgba(255,255,255,0.6)"></div><div style="position:absolute;left:1264px;top:716px;width:1px;height:28px;background:rgba(255,255,255,0.6)"></div><div style="position:absolute;left:1392px;top:716px;width:1px;height:28px;background:rgba(255,255,255,0.6)"></div><div style="position:absolute;left:1448px;top:716px;width:1px;height:28px;background:rgba(255,255,255,0.6)"></div><div style="position:absolute;left:1600px;top:716px;width:1px;height:28px;background:rgba(255,255,255,0.6)"></div><div style="position:absolute;left:1664px;top:716px;width:1px;height:28px;background:rgba(255,255,255,0.6)"></div><div style="position:absolute;left:529px;top:726px;font-size:12.6px;color:#222;white-space:nowrap;line-height:1;">sobaw93856</div><div style="position:absolute;left:705px;top:726px;font-size:12.6px;color:#222;white-space:nowrap;line-height:1;width:254px;overflow:hidden">sobaw93856_exclussi.com#EXT#@M365x887</div><div style="position:absolute;left:961px;top:726px;font-size:12.6px;color:#222;white-space:nowrap;line-height:1;">Guest</div><div style="position:absolute;left:1170px;top:723px;width:14px;height:14px;background:#2e9a5e;border-radius:50%;box-shadow:0 0 0 1px #9bc9ad"></div><svg style="position:absolute;left:1170px;top:723px" width="14" height="14" viewBox="0 0 14 14"><path d="M3.5 7.2 L6 9.6 L10.6 4.6" stroke="#fff" stroke-width="1.8" fill="none"/></svg><div style="position:absolute;left:1186px;top:726px;font-size:12.6px;color:#222;white-space:nowrap;line-height:1;">Allowed</div><div style="position:absolute;left:1449px;top:726px;font-size:12.6px;color:#9a9a9a;white-space:nowrap;line-height:1;">-- Unlicensed --</div><svg style="position:absolute;left:365px;top:722px" width="15" height="17" viewBox="0 0 15 17"><rect x="1" y="3" width="13" height="13" rx="1.5" fill="#2c7fd0" stroke="#9cc3ea" stroke-width="1"/><rect x="5.5" y="0.5" width="4" height="3" fill="#2c7fd0"/><circle cx="7.5" cy="8" r="2.4" fill="#fff"/><rect x="4" y="11.5" width="7" height="2.5" fill="#fff"/></svg><div style="position:absolute;left:1024px;top:744px;width:24px;height:28px;background:#d4d4d4"></div><div style="position:absolute;left:1264px;top:744px;width:128px;height:28px;background:#d4d4d4"></div><div style="position:absolute;left:1392px;top:744px;width:56px;height:28px;background:#d4d4d4"></div><div style="position:absolute;left:1448px;top:744px;width:216px;height:28px;background:#d4d4d4"></div><div style="position:absolute;left:344px;top:744px;width:1320px;height:1px;background:rgba(255,255,255,0.6)"></div><div style="position:absolute;left:363px;top:744px;width:1px;height:28px;background:rgba(255,255,255,0.6)"></div><div style="position:absolute;left:384px;top:744px;width:1px;height:28px;background:rgba(255,255,255,0.6)"></div><div style="position:absolute;left:528px;top:744px;width:1px;height:28px;background:rgba(255,255,255,0.6)"></div><div style="position:absolute;left:704px;top:744px;width:1px;height:28px;background:rgba(255,255,255,0.6)"></div><div style="position:absolute;left:960px;top:744px;width:1px;height:28px;background:rgba(255,255,255,0.6)"></div><div style="position:absolute;left:1024px;top:744px;width:1px;height:28px;background:rgba(255,255,255,0.6)"></div><div style="position:absolute;left:1048px;top:744px;width:1px;height:28px;background:rgba(255,255,255,0.6)"></div><div style="position:absolute;left:1168px;top:744px;width:1px;height:28px;background:rgba(255,255,255,0.6)"></div><div style="position:absolute;left:1264px;top:744px;width:1px;height:28px;background:rgba(255,255,255,0.6)"></div><div style="position:absolute;left:1392px;top:744px;width:1px;height:28px;background:rgba(255,255,255,0.6)"></div><div style="position:absolute;left:1448px;top:744px;width:1px;height:28px;background:rgba(255,255,255,0.6)"></div><div style="position:absolute;left:1600px;top:744px;width:1px;height:28px;background:rgba(255,255,255,0.6)"></div><div style="position:absolute;left:1664px;top:744px;width:1px;height:28px;background:rgba(255,255,255,0.6)"></div><div style="position:absolute;left:529px;top:754px;font-size:12.6px;color:#222;white-space:nowrap;line-height:1;">Conf Room Stevens</div><div style="position:absolute;left:705px;top:754px;font-size:12.6px;color:#222;white-space:nowrap;line-height:1;width:254px;overflow:hidden">Stevens@M365x88704954.OnMicrosoft.com</div><div style="position:absolute;left:961px;top:754px;font-size:12.6px;color:#222;white-space:nowrap;line-height:1;">Member</div><div style="position:absolute;left:1049px;top:754px;font-size:12.6px;color:#222;white-space:nowrap;line-height:1;">Engineering</div><div style="position:absolute;left:1170px;top:751px;width:14px;height:14px;background:#2e9a5e;border-radius:50%;box-shadow:0 0 0 1px #9bc9ad"></div><svg style="position:absolute;left:1170px;top:751px" width="14" height="14" viewBox="0 0 14 14"><path d="M3.5 7.2 L6 9.6 L10.6 4.6" stroke="#fff" stroke-width="1.8" fill="none"/></svg><div style="position:absolute;left:1186px;top:754px;font-size:12.6px;color:#222;white-space:nowrap;line-height:1;">Allowed</div><div style="position:absolute;left:1449px;top:754px;font-size:12.6px;color:#9a9a9a;white-space:nowrap;line-height:1;">-- Unlicensed --</div><svg style="position:absolute;left:364px;top:750px" width="18" height="17" viewBox="0 0 18 17"><circle cx="9" cy="6" r="4.8" fill="#2c7fd0" stroke="#9cc3ea" stroke-width="1"/><path d="M1.5 16 Q2 11 6 10.6 L12 10.6 Q16 11 16.5 16 Z" fill="#2c7fd0" stroke="#9cc3ea" stroke-width="1"/></svg><div style="position:absolute;left:1024px;top:772px;width:24px;height:28px;background:#d4d4d4"></div><div style="position:absolute;left:1448px;top:772px;width:216px;height:28px;background:#d4d4d4"></div><div style="position:absolute;left:344px;top:772px;width:1320px;height:1px;background:rgba(255,255,255,0.6)"></div><div style="position:absolute;left:363px;top:772px;width:1px;height:28px;background:rgba(255,255,255,0.6)"></div><div style="position:absolute;left:384px;top:772px;width:1px;height:28px;background:rgba(255,255,255,0.6)"></div><div style="position:absolute;left:528px;top:772px;width:1px;height:28px;background:rgba(255,255,255,0.6)"></div><div style="position:absolute;left:704px;top:772px;width:1px;height:28px;background:rgba(255,255,255,0.6)"></div><div style="position:absolute;left:960px;top:772px;width:1px;height:28px;background:rgba(255,255,255,0.6)"></div><div style="position:absolute;left:1024px;top:772px;width:1px;height:28px;background:rgba(255,255,255,0.6)"></div><div style="position:absolute;left:1048px;top:772px;width:1px;height:28px;background:rgba(255,255,255,0.6)"></div><div style="position:absolute;left:1168px;top:772px;width:1px;height:28px;background:rgba(255,255,255,0.6)"></div><div style="position:absolute;left:1264px;top:772px;width:1px;height:28px;background:rgba(255,255,255,0.6)"></div><div style="position:absolute;left:1392px;top:772px;width:1px;height:28px;background:rgba(255,255,255,0.6)"></div><div style="position:absolute;left:1448px;top:772px;width:1px;height:28px;background:rgba(255,255,255,0.6)"></div><div style="position:absolute;left:1600px;top:772px;width:1px;height:28px;background:rgba(255,255,255,0.6)"></div><div style="position:absolute;left:1664px;top:772px;width:1px;height:28px;background:rgba(255,255,255,0.6)"></div><div style="position:absolute;left:529px;top:782px;font-size:12.6px;color:#222;white-space:nowrap;line-height:1;">Grady Archie</div><div style="position:absolute;left:705px;top:782px;font-size:12.6px;color:#222;white-space:nowrap;line-height:1;width:254px;overflow:hidden">GradyA@M365x88704954.OnMicrosoft.com</div><div style="position:absolute;left:961px;top:782px;font-size:12.6px;color:#222;white-space:nowrap;line-height:1;">Member</div><div style="position:absolute;left:1049px;top:782px;font-size:12.6px;color:#222;white-space:nowrap;line-height:1;">HR</div><div style="position:absolute;left:1170px;top:779px;width:14px;height:14px;background:#d2492f;border-radius:50%;box-shadow:0 0 0 1px #e6a094"></div><div style="position:absolute;left:1173px;top:785px;width:8px;height:2px;background:#fff"></div><div style="position:absolute;left:1186px;top:782px;font-size:12.6px;color:#222;white-space:nowrap;line-height:1;">Blocked</div><div style="position:absolute;left:1264px;top:782px;font-size:12.6px;color:#222;white-space:nowrap;line-height:1;width:126px;text-align:right">1/13/2025 11:49 PM</div><div style="position:absolute;left:1393px;top:782px;font-size:12.6px;color:#222;white-space:nowrap;line-height:1;">US</div><div style="position:absolute;left:1449px;top:782px;font-size:12.6px;color:#9a9a9a;white-space:nowrap;line-height:1;">-- Unlicensed --</div><svg style="position:absolute;left:364px;top:778px" width="18" height="17" viewBox="0 0 18 17"><circle cx="9" cy="6" r="4.8" fill="#2c7fd0" stroke="#9cc3ea" stroke-width="1"/><path d="M1.5 16 Q2 11 6 10.6 L12 10.6 Q16 11 16.5 16 Z" fill="#2c7fd0" stroke="#9cc3ea" stroke-width="1"/></svg><div style="position:absolute;left:1024px;top:800px;width:24px;height:28px;background:#d4d4d4"></div><div style="position:absolute;left:1048px;top:800px;width:120px;height:28px;background:#d4d4d4"></div><div style="position:absolute;left:1264px;top:800px;width:128px;height:28px;background:#d4d4d4"></div><div style="position:absolute;left:1392px;top:800px;width:56px;height:28px;background:#d4d4d4"></div><div style="position:absolute;left:1448px;top:800px;width:216px;height:28px;background:#d4d4d4"></div><div style="position:absolute;left:344px;top:800px;width:1320px;height:1px;background:rgba(255,255,255,0.6)"></div><div style="position:absolute;left:363px;top:800px;width:1px;height:28px;background:rgba(255,255,255,0.6)"></div><div style="position:absolute;left:384px;top:800px;width:1px;height:28px;background:rgba(255,255,255,0.6)"></div><div style="position:absolute;left:528px;top:800px;width:1px;height:28px;background:rgba(255,255,255,0.6)"></div><div style="position:absolute;left:704px;top:800px;width:1px;height:28px;background:rgba(255,255,255,0.6)"></div><div style="position:absolute;left:960px;top:800px;width:1px;height:28px;background:rgba(255,255,255,0.6)"></div><div style="position:absolute;left:1024px;top:800px;width:1px;height:28px;background:rgba(255,255,255,0.6)"></div><div style="position:absolute;left:1048px;top:800px;width:1px;height:28px;background:rgba(255,255,255,0.6)"></div><div style="position:absolute;left:1168px;top:800px;width:1px;height:28px;background:rgba(255,255,255,0.6)"></div><div style="position:absolute;left:1264px;top:800px;width:1px;height:28px;background:rgba(255,255,255,0.6)"></div><div style="position:absolute;left:1392px;top:800px;width:1px;height:28px;background:rgba(255,255,255,0.6)"></div><div style="position:absolute;left:1448px;top:800px;width:1px;height:28px;background:rgba(255,255,255,0.6)"></div><div style="position:absolute;left:1600px;top:800px;width:1px;height:28px;background:rgba(255,255,255,0.6)"></div><div style="position:absolute;left:1664px;top:800px;width:1px;height:28px;background:rgba(255,255,255,0.6)"></div><div style="position:absolute;left:529px;top:810px;font-size:12.6px;color:#222;white-space:nowrap;line-height:1;">fawocoj474</div><div style="position:absolute;left:705px;top:810px;font-size:12.6px;color:#222;white-space:nowrap;line-height:1;width:254px;overflow:hidden">fawocoj474_buides.com#EXT#@M365x8870(</div><div style="position:absolute;left:961px;top:810px;font-size:12.6px;color:#222;white-space:nowrap;line-height:1;">Guest</div><div style="position:absolute;left:1170px;top:807px;width:14px;height:14px;background:#2e9a5e;border-radius:50%;box-shadow:0 0 0 1px #9bc9ad"></div><svg style="position:absolute;left:1170px;top:807px" width="14" height="14" viewBox="0 0 14 14"><path d="M3.5 7.2 L6 9.6 L10.6 4.6" stroke="#fff" stroke-width="1.8" fill="none"/></svg><div style="position:absolute;left:1186px;top:810px;font-size:12.6px;color:#222;white-space:nowrap;line-height:1;">Allowed</div><div style="position:absolute;left:1449px;top:810px;font-size:12.6px;color:#9a9a9a;white-space:nowrap;line-height:1;">-- Unlicensed --</div><svg style="position:absolute;left:365px;top:806px" width="15" height="17" viewBox="0 0 15 17"><rect x="1" y="3" width="13" height="13" rx="1.5" fill="#2c7fd0" stroke="#9cc3ea" stroke-width="1"/><rect x="5.5" y="0.5" width="4" height="3" fill="#2c7fd0"/><circle cx="7.5" cy="8" r="2.4" fill="#fff"/><rect x="4" y="11.5" width="7" height="2.5" fill="#fff"/></svg><div style="position:absolute;left:1024px;top:828px;width:24px;height:28px;background:#d4d4d4"></div><div style="position:absolute;left:1264px;top:828px;width:128px;height:28px;background:#d4d4d4"></div><div style="position:absolute;left:1448px;top:828px;width:216px;height:28px;background:#d4d4d4"></div><div style="position:absolute;left:344px;top:828px;width:1320px;height:1px;background:rgba(255,255,255,0.6)"></div><div style="position:absolute;left:363px;top:828px;width:1px;height:28px;background:rgba(255,255,255,0.6)"></div><div style="position:absolute;left:384px;top:828px;width:1px;height:28px;background:rgba(255,255,255,0.6)"></div><div style="position:absolute;left:528px;top:828px;width:1px;height:28px;background:rgba(255,255,255,0.6)"></div><div style="position:absolute;left:704px;top:828px;width:1px;height:28px;background:rgba(255,255,255,0.6)"></div><div style="position:absolute;left:960px;top:828px;width:1px;height:28px;background:rgba(255,255,255,0.6)"></div><div style="position:absolute;left:1024px;top:828px;width:1px;height:28px;background:rgba(255,255,255,0.6)"></div><div style="position:absolute;left:1048px;top:828px;width:1px;height:28px;background:rgba(255,255,255,0.6)"></div><div style="position:absolute;left:1168px;top:828px;width:1px;height:28px;background:rgba(255,255,255,0.6)"></div><div style="position:absolute;left:1264px;top:828px;width:1px;height:28px;background:rgba(255,255,255,0.6)"></div><div style="position:absolute;left:1392px;top:828px;width:1px;height:28px;background:rgba(255,255,255,0.6)"></div><div style="position:absolute;left:1448px;top:828px;width:1px;height:28px;background:rgba(255,255,255,0.6)"></div><div style="position:absolute;left:1600px;top:828px;width:1px;height:28px;background:rgba(255,255,255,0.6)"></div><div style="position:absolute;left:1664px;top:828px;width:1px;height:28px;background:rgba(255,255,255,0.6)"></div><div style="position:absolute;left:529px;top:838px;font-size:12.6px;color:#222;white-space:nowrap;line-height:1;">Gerhart Moller</div><div style="position:absolute;left:705px;top:838px;font-size:12.6px;color:#222;white-space:nowrap;line-height:1;width:254px;overflow:hidden">GerhartM@M365x88704954.OnMicrosoft.cor</div><div style="position:absolute;left:961px;top:838px;font-size:12.6px;color:#222;white-space:nowrap;line-height:1;">Member</div><div style="position:absolute;left:1049px;top:838px;font-size:12.6px;color:#222;white-space:nowrap;line-height:1;">Administrative</div><div style="position:absolute;left:1170px;top:835px;width:14px;height:14px;background:#2e9a5e;border-radius:50%;box-shadow:0 0 0 1px #9bc9ad"></div><svg style="position:absolute;left:1170px;top:835px" width="14" height="14" viewBox="0 0 14 14"><path d="M3.5 7.2 L6 9.6 L10.6 4.6" stroke="#fff" stroke-width="1.8" fill="none"/></svg><div style="position:absolute;left:1186px;top:838px;font-size:12.6px;color:#222;white-space:nowrap;line-height:1;">Allowed</div><div style="position:absolute;left:1393px;top:838px;font-size:12.6px;color:#222;white-space:nowrap;line-height:1;">US</div><div style="position:absolute;left:1449px;top:838px;font-size:12.6px;color:#9a9a9a;white-space:nowrap;line-height:1;">-- Unlicensed --</div><svg style="position:absolute;left:364px;top:834px" width="18" height="17" viewBox="0 0 18 17"><circle cx="9" cy="6" r="4.8" fill="#2c7fd0" stroke="#9cc3ea" stroke-width="1"/><path d="M1.5 16 Q2 11 6 10.6 L12 10.6 Q16 11 16.5 16 Z" fill="#2c7fd0" stroke="#9cc3ea" stroke-width="1"/></svg><div style="position:absolute;left:1024px;top:856px;width:24px;height:28px;background:#d4d4d4"></div><div style="position:absolute;left:344px;top:856px;width:1320px;height:1px;background:rgba(255,255,255,0.6)"></div><div style="position:absolute;left:363px;top:856px;width:1px;height:28px;background:rgba(255,255,255,0.6)"></div><div style="position:absolute;left:384px;top:856px;width:1px;height:28px;background:rgba(255,255,255,0.6)"></div><div style="position:absolute;left:528px;top:856px;width:1px;height:28px;background:rgba(255,255,255,0.6)"></div><div style="position:absolute;left:704px;top:856px;width:1px;height:28px;background:rgba(255,255,255,0.6)"></div><div style="position:absolute;left:960px;top:856px;width:1px;height:28px;background:rgba(255,255,255,0.6)"></div><div style="position:absolute;left:1024px;top:856px;width:1px;height:28px;background:rgba(255,255,255,0.6)"></div><div style="position:absolute;left:1048px;top:856px;width:1px;height:28px;background:rgba(255,255,255,0.6)"></div><div style="position:absolute;left:1168px;top:856px;width:1px;height:28px;background:rgba(255,255,255,0.6)"></div><div style="position:absolute;left:1264px;top:856px;width:1px;height:28px;background:rgba(255,255,255,0.6)"></div><div style="position:absolute;left:1392px;top:856px;width:1px;height:28px;background:rgba(255,255,255,0.6)"></div><div style="position:absolute;left:1448px;top:856px;width:1px;height:28px;background:rgba(255,255,255,0.6)"></div><div style="position:absolute;left:1600px;top:856px;width:1px;height:28px;background:rgba(255,255,255,0.6)"></div><div style="position:absolute;left:1664px;top:856px;width:1px;height:28px;background:rgba(255,255,255,0.6)"></div><div style="position:absolute;left:529px;top:866px;font-size:12.6px;color:#222;white-space:nowrap;line-height:1;">Isaiah Langer</div><div style="position:absolute;left:705px;top:866px;font-size:12.6px;color:#222;white-space:nowrap;line-height:1;width:254px;overflow:hidden">IsaiahL@M365x88704954.OnMicrosoft.com</div><div style="position:absolute;left:961px;top:866px;font-size:12.6px;color:#222;white-space:nowrap;line-height:1;">Member</div><div style="position:absolute;left:1049px;top:866px;font-size:12.6px;color:#222;white-space:nowrap;line-height:1;">Sales</div><div style="position:absolute;left:1170px;top:863px;width:14px;height:14px;background:#2e9a5e;border-radius:50%;box-shadow:0 0 0 1px #9bc9ad"></div><svg style="position:absolute;left:1170px;top:863px" width="14" height="14" viewBox="0 0 14 14"><path d="M3.5 7.2 L6 9.6 L10.6 4.6" stroke="#fff" stroke-width="1.8" fill="none"/></svg><div style="position:absolute;left:1186px;top:866px;font-size:12.6px;color:#222;white-space:nowrap;line-height:1;">Allowed</div><div style="position:absolute;left:1264px;top:866px;font-size:12.6px;color:#222;white-space:nowrap;line-height:1;width:126px;text-align:right">1/13/2025 11:50 PM</div><div style="position:absolute;left:1393px;top:866px;font-size:12.6px;color:#222;white-space:nowrap;line-height:1;">US</div><div style="position:absolute;left:1449px;top:864px;font-size:12.6px;color:#222;white-space:nowrap;line-height:1;width:150px;overflow:hidden;line-height:15px;height:17px">[2] Microsoft_Teams_Enterprise</div><div style="position:absolute;left:1601px;top:866px;font-size:12.6px;color:#222;white-space:nowrap;line-height:1;">[2]&#8709;;&#8709;</div><div style="position:absolute;left:345px;top:864px;width:14px;height:14px;border:2px solid #a8a8a8;border-radius:50%;background:#fff"></div><div style="position:absolute;left:349px;top:868px;width:6px;height:6px;background:#8c8c8c;border-radius:50%"></div><svg style="position:absolute;left:364px;top:862px" width="18" height="17" viewBox="0 0 18 17"><circle cx="9" cy="6" r="4.8" fill="#2c7fd0" stroke="#9cc3ea" stroke-width="1"/><path d="M1.5 16 Q2 11 6 10.6 L12 10.6 Q16 11 16.5 16 Z" fill="#2c7fd0" stroke="#9cc3ea" stroke-width="1"/></svg><div style="position:absolute;left:1024px;top:884px;width:24px;height:28px;background:#d4d4d4"></div><div style="position:absolute;left:1048px;top:884px;width:120px;height:28px;background:#d4d4d4"></div><div style="position:absolute;left:1264px;top:884px;width:128px;height:28px;background:#d4d4d4"></div><div style="position:absolute;left:1600px;top:884px;width:64px;height:28px;background:#d4d4d4"></div><div style="position:absolute;left:344px;top:884px;width:1320px;height:1px;background:rgba(255,255,255,0.6)"></div><div style="position:absolute;left:363px;top:884px;width:1px;height:28px;background:rgba(255,255,255,0.6)"></div><div style="position:absolute;left:384px;top:884px;width:1px;height:28px;background:rgba(255,255,255,0.6)"></div><div style="position:absolute;left:528px;top:884px;width:1px;height:28px;background:rgba(255,255,255,0.6)"></div><div style="position:absolute;left:704px;top:884px;width:1px;height:28px;background:rgba(255,255,255,0.6)"></div><div style="position:absolute;left:960px;top:884px;width:1px;height:28px;background:rgba(255,255,255,0.6)"></div><div style="position:absolute;left:1024px;top:884px;width:1px;height:28px;background:rgba(255,255,255,0.6)"></div><div style="position:absolute;left:1048px;top:884px;width:1px;height:28px;background:rgba(255,255,255,0.6)"></div><div style="position:absolute;left:1168px;top:884px;width:1px;height:28px;background:rgba(255,255,255,0.6)"></div><div style="position:absolute;left:1264px;top:884px;width:1px;height:28px;background:rgba(255,255,255,0.6)"></div><div style="position:absolute;left:1392px;top:884px;width:1px;height:28px;background:rgba(255,255,255,0.6)"></div><div style="position:absolute;left:1448px;top:884px;width:1px;height:28px;background:rgba(255,255,255,0.6)"></div><div style="position:absolute;left:1600px;top:884px;width:1px;height:28px;background:rgba(255,255,255,0.6)"></div><div style="position:absolute;left:1664px;top:884px;width:1px;height:28px;background:rgba(255,255,255,0.6)"></div><div style="position:absolute;left:529px;top:894px;font-size:12.6px;color:#222;white-space:nowrap;line-height:1;">Aaron Appleby</div><div style="position:absolute;left:705px;top:894px;font-size:12.6px;color:#222;white-space:nowrap;line-height:1;width:254px;overflow:hidden">AaronA@M365x88704954.onmicrosoft.com</div><div style="position:absolute;left:961px;top:894px;font-size:12.6px;color:#222;white-space:nowrap;line-height:1;">Member</div><div style="position:absolute;left:1170px;top:891px;width:14px;height:14px;background:#2e9a5e;border-radius:50%;box-shadow:0 0 0 1px #9bc9ad"></div><svg style="position:absolute;left:1170px;top:891px" width="14" height="14" viewBox="0 0 14 14"><path d="M3.5 7.2 L6 9.6 L10.6 4.6" stroke="#fff" stroke-width="1.8" fill="none"/></svg><div style="position:absolute;left:1186px;top:894px;font-size:12.6px;color:#222;white-space:nowrap;line-height:1;">Allowed</div><div style="position:absolute;left:1393px;top:894px;font-size:12.6px;color:#222;white-space:nowrap;line-height:1;">US</div><div style="position:absolute;left:1449px;top:892px;font-size:12.6px;color:#222;white-space:nowrap;line-height:1;width:150px;overflow:hidden;line-height:15px;height:17px">Microsoft_365_E5_(no_Tear</div><div style="position:absolute;left:1623px;top:894px;font-size:12.6px;color:#9a9a9a;white-space:nowrap;line-height:1;width:40px;overflow:hidden">- Set lic</div><svg style="position:absolute;left:1602px;top:890px" width="18" height="17" viewBox="0 0 18 17"><circle cx="7" cy="7" r="4.5" fill="none" stroke="#8a8a8a" stroke-width="2" stroke-dasharray="2 1.5"/><circle cx="11.5" cy="11.5" r="4.5" fill="#3b74c4"/><rect x="10.9" y="10.5" width="1.3" height="3.5" fill="#fff"/><rect x="10.9" y="8.6" width="1.3" height="1.2" fill="#fff"/></svg><svg style="position:absolute;left:364px;top:890px" width="18" height="17" viewBox="0 0 18 17"><circle cx="9" cy="6" r="4.8" fill="#2c7fd0" stroke="#9cc3ea" stroke-width="1"/><path d="M1.5 16 Q2 11 6 10.6 L12 10.6 Q16 11 16.5 16 Z" fill="#2c7fd0" stroke="#9cc3ea" stroke-width="1"/></svg><div style="position:absolute;left:1024px;top:912px;width:24px;height:28px;background:#d4d4d4"></div><div style="position:absolute;left:1448px;top:912px;width:216px;height:28px;background:#d4d4d4"></div><div style="position:absolute;left:344px;top:912px;width:1320px;height:1px;background:rgba(255,255,255,0.6)"></div><div style="position:absolute;left:363px;top:912px;width:1px;height:28px;background:rgba(255,255,255,0.6)"></div><div style="position:absolute;left:384px;top:912px;width:1px;height:28px;background:rgba(255,255,255,0.6)"></div><div style="position:absolute;left:528px;top:912px;width:1px;height:28px;background:rgba(255,255,255,0.6)"></div><div style="position:absolute;left:704px;top:912px;width:1px;height:28px;background:rgba(255,255,255,0.6)"></div><div style="position:absolute;left:960px;top:912px;width:1px;height:28px;background:rgba(255,255,255,0.6)"></div><div style="position:absolute;left:1024px;top:912px;width:1px;height:28px;background:rgba(255,255,255,0.6)"></div><div style="position:absolute;left:1048px;top:912px;width:1px;height:28px;background:rgba(255,255,255,0.6)"></div><div style="position:absolute;left:1168px;top:912px;width:1px;height:28px;background:rgba(255,255,255,0.6)"></div><div style="position:absolute;left:1264px;top:912px;width:1px;height:28px;background:rgba(255,255,255,0.6)"></div><div style="position:absolute;left:1392px;top:912px;width:1px;height:28px;background:rgba(255,255,255,0.6)"></div><div style="position:absolute;left:1448px;top:912px;width:1px;height:28px;background:rgba(255,255,255,0.6)"></div><div style="position:absolute;left:1600px;top:912px;width:1px;height:28px;background:rgba(255,255,255,0.6)"></div><div style="position:absolute;left:1664px;top:912px;width:1px;height:28px;background:rgba(255,255,255,0.6)"></div><div style="position:absolute;left:529px;top:922px;font-size:12.6px;color:#222;white-space:nowrap;line-height:1;">Cameron White</div><div style="position:absolute;left:705px;top:922px;font-size:12.6px;color:#222;white-space:nowrap;line-height:1;width:254px;overflow:hidden">CameronW@M365x88704954.OnMicrosoft.c(</div><div style="position:absolute;left:961px;top:922px;font-size:12.6px;color:#222;white-space:nowrap;line-height:1;">Member</div><div style="position:absolute;left:1049px;top:922px;font-size:12.6px;color:#222;white-space:nowrap;line-height:1;">IT</div><div style="position:absolute;left:1170px;top:919px;width:14px;height:14px;background:#2e9a5e;border-radius:50%;box-shadow:0 0 0 1px #9bc9ad"></div><svg style="position:absolute;left:1170px;top:919px" width="14" height="14" viewBox="0 0 14 14"><path d="M3.5 7.2 L6 9.6 L10.6 4.6" stroke="#fff" stroke-width="1.8" fill="none"/></svg><div style="position:absolute;left:1186px;top:922px;font-size:12.6px;color:#222;white-space:nowrap;line-height:1;">Allowed</div><div style="position:absolute;left:1264px;top:922px;font-size:12.6px;color:#222;white-space:nowrap;line-height:1;width:126px;text-align:right">5/15/2025 01:46 PM</div><div style="position:absolute;left:1393px;top:922px;font-size:12.6px;color:#222;white-space:nowrap;line-height:1;">US</div><div style="position:absolute;left:1449px;top:922px;font-size:12.6px;color:#9a9a9a;white-space:nowrap;line-height:1;">-- Unlicensed --</div><div style="position:absolute;left:345px;top:920px;width:14px;height:14px;border:2px solid #a8a8a8;border-radius:50%;background:#fff"></div><div style="position:absolute;left:349px;top:924px;width:6px;height:6px;background:#8c8c8c;border-radius:50%"></div><svg style="position:absolute;left:364px;top:918px" width="18" height="17" viewBox="0 0 18 17"><circle cx="9" cy="6" r="4.8" fill="#2c7fd0" stroke="#9cc3ea" stroke-width="1"/><path d="M1.5 16 Q2 11 6 10.6 L12 10.6 Q16 11 16.5 16 Z" fill="#2c7fd0" stroke="#9cc3ea" stroke-width="1"/></svg><div style="position:absolute;left:1024px;top:940px;width:24px;height:28px;background:#d4d4d4"></div><div style="position:absolute;left:344px;top:940px;width:1320px;height:1px;background:rgba(255,255,255,0.6)"></div><div style="position:absolute;left:363px;top:940px;width:1px;height:28px;background:rgba(255,255,255,0.6)"></div><div style="position:absolute;left:384px;top:940px;width:1px;height:28px;background:rgba(255,255,255,0.6)"></div><div style="position:absolute;left:528px;top:940px;width:1px;height:28px;background:rgba(255,255,255,0.6)"></div><div style="position:absolute;left:704px;top:940px;width:1px;height:28px;background:rgba(255,255,255,0.6)"></div><div style="position:absolute;left:960px;top:940px;width:1px;height:28px;background:rgba(255,255,255,0.6)"></div><div style="position:absolute;left:1024px;top:940px;width:1px;height:28px;background:rgba(255,255,255,0.6)"></div><div style="position:absolute;left:1048px;top:940px;width:1px;height:28px;background:rgba(255,255,255,0.6)"></div><div style="position:absolute;left:1168px;top:940px;width:1px;height:28px;background:rgba(255,255,255,0.6)"></div><div style="position:absolute;left:1264px;top:940px;width:1px;height:28px;background:rgba(255,255,255,0.6)"></div><div style="position:absolute;left:1392px;top:940px;width:1px;height:28px;background:rgba(255,255,255,0.6)"></div><div style="position:absolute;left:1448px;top:940px;width:1px;height:28px;background:rgba(255,255,255,0.6)"></div><div style="position:absolute;left:1600px;top:940px;width:1px;height:28px;background:rgba(255,255,255,0.6)"></div><div style="position:absolute;left:1664px;top:940px;width:1px;height:28px;background:rgba(255,255,255,0.6)"></div><div style="position:absolute;left:529px;top:950px;font-size:12.6px;color:#222;white-space:nowrap;line-height:1;">Diego Siciliani</div><div style="position:absolute;left:705px;top:950px;font-size:12.6px;color:#222;white-space:nowrap;line-height:1;width:254px;overflow:hidden">DiegoS@M365x88704954.OnMicrosoft.com</div><div style="position:absolute;left:961px;top:950px;font-size:12.6px;color:#222;white-space:nowrap;line-height:1;">Member</div><div style="position:absolute;left:1049px;top:950px;font-size:12.6px;color:#222;white-space:nowrap;line-height:1;">Sales</div><div style="position:absolute;left:1170px;top:947px;width:14px;height:14px;background:#2e9a5e;border-radius:50%;box-shadow:0 0 0 1px #9bc9ad"></div><svg style="position:absolute;left:1170px;top:947px" width="14" height="14" viewBox="0 0 14 14"><path d="M3.5 7.2 L6 9.6 L10.6 4.6" stroke="#fff" stroke-width="1.8" fill="none"/></svg><div style="position:absolute;left:1186px;top:950px;font-size:12.6px;color:#222;white-space:nowrap;line-height:1;">Allowed</div><div style="position:absolute;left:1264px;top:950px;font-size:12.6px;color:#222;white-space:nowrap;line-height:1;width:126px;text-align:right">6/17/2025 01:26 PM</div><div style="position:absolute;left:1393px;top:950px;font-size:12.6px;color:#222;white-space:nowrap;line-height:1;">US</div><div style="position:absolute;left:1449px;top:948px;font-size:12.6px;color:#222;white-space:nowrap;line-height:1;width:150px;overflow:hidden;line-height:15px;height:17px">[2] Microsoft_Teams_Enterprise</div><div style="position:absolute;left:1601px;top:950px;font-size:12.6px;color:#222;white-space:nowrap;line-height:1;">[2]&#8709;;&#8709;</div><div style="position:absolute;left:345px;top:948px;width:14px;height:14px;border:2px solid #a8a8a8;border-radius:50%;background:#fff"></div><div style="position:absolute;left:349px;top:952px;width:6px;height:6px;background:#8c8c8c;border-radius:50%"></div><svg style="position:absolute;left:364px;top:946px" width="18" height="17" viewBox="0 0 18 17"><circle cx="9" cy="6" r="4.8" fill="#2c7fd0" stroke="#9cc3ea" stroke-width="1"/><path d="M1.5 16 Q2 11 6 10.6 L12 10.6 Q16 11 16.5 16 Z" fill="#2c7fd0" stroke="#9cc3ea" stroke-width="1"/></svg><div style="position:absolute;left:1024px;top:968px;width:24px;height:28px;background:#d4d4d4"></div><div style="position:absolute;left:344px;top:968px;width:1320px;height:1px;background:rgba(255,255,255,0.6)"></div><div style="position:absolute;left:363px;top:968px;width:1px;height:28px;background:rgba(255,255,255,0.6)"></div><div style="position:absolute;left:384px;top:968px;width:1px;height:28px;background:rgba(255,255,255,0.6)"></div><div style="position:absolute;left:528px;top:968px;width:1px;height:28px;background:rgba(255,255,255,0.6)"></div><div style="position:absolute;left:704px;top:968px;width:1px;height:28px;background:rgba(255,255,255,0.6)"></div><div style="position:absolute;left:960px;top:968px;width:1px;height:28px;background:rgba(255,255,255,0.6)"></div><div style="position:absolute;left:1024px;top:968px;width:1px;height:28px;background:rgba(255,255,255,0.6)"></div><div style="position:absolute;left:1048px;top:968px;width:1px;height:28px;background:rgba(255,255,255,0.6)"></div><div style="position:absolute;left:1168px;top:968px;width:1px;height:28px;background:rgba(255,255,255,0.6)"></div><div style="position:absolute;left:1264px;top:968px;width:1px;height:28px;background:rgba(255,255,255,0.6)"></div><div style="position:absolute;left:1392px;top:968px;width:1px;height:28px;background:rgba(255,255,255,0.6)"></div><div style="position:absolute;left:1448px;top:968px;width:1px;height:28px;background:rgba(255,255,255,0.6)"></div><div style="position:absolute;left:1600px;top:968px;width:1px;height:28px;background:rgba(255,255,255,0.6)"></div><div style="position:absolute;left:1664px;top:968px;width:1px;height:28px;background:rgba(255,255,255,0.6)"></div><div style="position:absolute;left:529px;top:978px;font-size:12.6px;color:#222;white-space:nowrap;line-height:1;">Johanna Lorenz</div><div style="position:absolute;left:705px;top:978px;font-size:12.6px;color:#222;white-space:nowrap;line-height:1;width:254px;overflow:hidden">JohannaL@M365x88704954.OnMicrosoft.con</div><div style="position:absolute;left:961px;top:978px;font-size:12.6px;color:#222;white-space:nowrap;line-height:1;">Member</div><div style="position:absolute;left:1049px;top:978px;font-size:12.6px;color:#222;white-space:nowrap;line-height:1;">Administrative</div><div style="position:absolute;left:1170px;top:975px;width:14px;height:14px;background:#2e9a5e;border-radius:50%;box-shadow:0 0 0 1px #9bc9ad"></div><svg style="position:absolute;left:1170px;top:975px" width="14" height="14" viewBox="0 0 14 14"><path d="M3.5 7.2 L6 9.6 L10.6 4.6" stroke="#fff" stroke-width="1.8" fill="none"/></svg><div style="position:absolute;left:1186px;top:978px;font-size:12.6px;color:#222;white-space:nowrap;line-height:1;">Allowed</div><div style="position:absolute;left:1264px;top:978px;font-size:12.6px;color:#222;white-space:nowrap;line-height:1;width:126px;text-align:right">1/13/2025 11:50 PM</div><div style="position:absolute;left:1393px;top:978px;font-size:12.6px;color:#222;white-space:nowrap;line-height:1;">US</div><div style="position:absolute;left:1449px;top:976px;font-size:12.6px;color:#222;white-space:nowrap;line-height:1;width:150px;overflow:hidden;line-height:15px;height:17px">[2] Microsoft_Teams_Enterprise</div><div style="position:absolute;left:1601px;top:978px;font-size:12.6px;color:#222;white-space:nowrap;line-height:1;">[2]&#8709;;&#8709;</div><div style="position:absolute;left:345px;top:976px;width:14px;height:14px;border:2px solid #a8a8a8;border-radius:50%;background:#fff"></div><div style="position:absolute;left:349px;top:980px;width:6px;height:6px;background:#8c8c8c;border-radius:50%"></div><svg style="position:absolute;left:364px;top:974px" width="18" height="17" viewBox="0 0 18 17"><circle cx="9" cy="6" r="4.8" fill="#2c7fd0" stroke="#9cc3ea" stroke-width="1"/><path d="M1.5 16 Q2 11 6 10.6 L12 10.6 Q16 11 16.5 16 Z" fill="#2c7fd0" stroke="#9cc3ea" stroke-width="1"/></svg><div style="position:absolute;left:1024px;top:996px;width:24px;height:28px;background:#d4d4d4"></div><div style="position:absolute;left:1264px;top:996px;width:128px;height:28px;background:#d4d4d4"></div><div style="position:absolute;left:1392px;top:996px;width:56px;height:28px;background:#d4d4d4"></div><div style="position:absolute;left:1448px;top:996px;width:216px;height:28px;background:#d4d4d4"></div><div style="position:absolute;left:344px;top:996px;width:1320px;height:1px;background:rgba(255,255,255,0.6)"></div><div style="position:absolute;left:363px;top:996px;width:1px;height:28px;background:rgba(255,255,255,0.6)"></div><div style="position:absolute;left:384px;top:996px;width:1px;height:28px;background:rgba(255,255,255,0.6)"></div><div style="position:absolute;left:528px;top:996px;width:1px;height:28px;background:rgba(255,255,255,0.6)"></div><div style="position:absolute;left:704px;top:996px;width:1px;height:28px;background:rgba(255,255,255,0.6)"></div><div style="position:absolute;left:960px;top:996px;width:1px;height:28px;background:rgba(255,255,255,0.6)"></div><div style="position:absolute;left:1024px;top:996px;width:1px;height:28px;background:rgba(255,255,255,0.6)"></div><div style="position:absolute;left:1048px;top:996px;width:1px;height:28px;background:rgba(255,255,255,0.6)"></div><div style="position:absolute;left:1168px;top:996px;width:1px;height:28px;background:rgba(255,255,255,0.6)"></div><div style="position:absolute;left:1264px;top:996px;width:1px;height:28px;background:rgba(255,255,255,0.6)"></div><div style="position:absolute;left:1392px;top:996px;width:1px;height:28px;background:rgba(255,255,255,0.6)"></div><div style="position:absolute;left:1448px;top:996px;width:1px;height:28px;background:rgba(255,255,255,0.6)"></div><div style="position:absolute;left:1600px;top:996px;width:1px;height:28px;background:rgba(255,255,255,0.6)"></div><div style="position:absolute;left:1664px;top:996px;width:1px;height:28px;background:rgba(255,255,255,0.6)"></div><div style="position:absolute;left:529px;top:1006px;font-size:12.6px;color:#222;white-space:nowrap;line-height:1;">Conf Room Crystal</div><div style="position:absolute;left:705px;top:1006px;font-size:12.6px;color:#222;white-space:nowrap;line-height:1;width:254px;overflow:hidden">Crystal@M365x88704954.OnMicrosoft.com</div><div style="position:absolute;left:961px;top:1006px;font-size:12.6px;color:#222;white-space:nowrap;line-height:1;">Member</div><div style="position:absolute;left:1049px;top:1006px;font-size:12.6px;color:#222;white-space:nowrap;line-height:1;">Marketing</div><div style="position:absolute;left:1170px;top:1003px;width:14px;height:14px;background:#2e9a5e;border-radius:50%;box-shadow:0 0 0 1px #9bc9ad"></div><svg style="position:absolute;left:1170px;top:1003px" width="14" height="14" viewBox="0 0 14 14"><path d="M3.5 7.2 L6 9.6 L10.6 4.6" stroke="#fff" stroke-width="1.8" fill="none"/></svg><div style="position:absolute;left:1186px;top:1006px;font-size:12.6px;color:#222;white-space:nowrap;line-height:1;">Allowed</div><div style="position:absolute;left:1449px;top:1006px;font-size:12.6px;color:#9a9a9a;white-space:nowrap;line-height:1;">-- Unlicensed --</div><svg style="position:absolute;left:364px;top:1002px" width="18" height="17" viewBox="0 0 18 17"><circle cx="9" cy="6" r="4.8" fill="#2c7fd0" stroke="#9cc3ea" stroke-width="1"/><path d="M1.5 16 Q2 11 6 10.6 L12 10.6 Q16 11 16.5 16 Z" fill="#2c7fd0" stroke="#9cc3ea" stroke-width="1"/></svg><div style="position:absolute;left:1024px;top:1024px;width:24px;height:28px;background:#d4d4d4"></div><div style="position:absolute;left:1048px;top:1024px;width:120px;height:28px;background:#d4d4d4"></div><div style="position:absolute;left:344px;top:1024px;width:1320px;height:1px;background:rgba(255,255,255,0.6)"></div><div style="position:absolute;left:363px;top:1024px;width:1px;height:28px;background:rgba(255,255,255,0.6)"></div><div style="position:absolute;left:384px;top:1024px;width:1px;height:28px;background:rgba(255,255,255,0.6)"></div><div style="position:absolute;left:528px;top:1024px;width:1px;height:28px;background:rgba(255,255,255,0.6)"></div><div style="position:absolute;left:704px;top:1024px;width:1px;height:28px;background:rgba(255,255,255,0.6)"></div><div style="position:absolute;left:960px;top:1024px;width:1px;height:28px;background:rgba(255,255,255,0.6)"></div><div style="position:absolute;left:1024px;top:1024px;width:1px;height:28px;background:rgba(255,255,255,0.6)"></div><div style="position:absolute;left:1048px;top:1024px;width:1px;height:28px;background:rgba(255,255,255,0.6)"></div><div style="position:absolute;left:1168px;top:1024px;width:1px;height:28px;background:rgba(255,255,255,0.6)"></div><div style="position:absolute;left:1264px;top:1024px;width:1px;height:28px;background:rgba(255,255,255,0.6)"></div><div style="position:absolute;left:1392px;top:1024px;width:1px;height:28px;background:rgba(255,255,255,0.6)"></div><div style="position:absolute;left:1448px;top:1024px;width:1px;height:28px;background:rgba(255,255,255,0.6)"></div><div style="position:absolute;left:1600px;top:1024px;width:1px;height:28px;background:rgba(255,255,255,0.6)"></div><div style="position:absolute;left:1664px;top:1024px;width:1px;height:28px;background:rgba(255,255,255,0.6)"></div><div style="position:absolute;left:529px;top:1034px;font-size:12.6px;color:#222;white-space:nowrap;line-height:1;">Patti Fernandez</div><div style="position:absolute;left:705px;top:1034px;font-size:12.6px;color:#222;white-space:nowrap;line-height:1;width:254px;overflow:hidden">PattiF@M365x88704954.OnMicrosoft.com</div><div style="position:absolute;left:961px;top:1034px;font-size:12.6px;color:#222;white-space:nowrap;line-height:1;">Member</div><div style="position:absolute;left:1170px;top:1031px;width:14px;height:14px;background:#2e9a5e;border-radius:50%;box-shadow:0 0 0 1px #9bc9ad"></div><svg style="position:absolute;left:1170px;top:1031px" width="14" height="14" viewBox="0 0 14 14"><path d="M3.5 7.2 L6 9.6 L10.6 4.6" stroke="#fff" stroke-width="1.8" fill="none"/></svg><div style="position:absolute;left:1186px;top:1034px;font-size:12.6px;color:#222;white-space:nowrap;line-height:1;">Allowed</div><div style="position:absolute;left:1264px;top:1034px;font-size:12.6px;color:#222;white-space:nowrap;line-height:1;width:126px;text-align:right">1/13/2025 11:52 PM</div><div style="position:absolute;left:1393px;top:1034px;font-size:12.6px;color:#222;white-space:nowrap;line-height:1;">US</div><div style="position:absolute;left:1449px;top:1032px;font-size:12.6px;color:#222;white-space:nowrap;line-height:1;width:150px;overflow:hidden;line-height:15px;height:17px">[2] Microsoft_Teams_Enterprise</div><div style="position:absolute;left:1601px;top:1034px;font-size:12.6px;color:#222;white-space:nowrap;line-height:1;">[2]&#8709;;&#8709;</div><div style="position:absolute;left:345px;top:1032px;width:14px;height:14px;border:2px solid #a8a8a8;border-radius:50%;background:#fff"></div><div style="position:absolute;left:349px;top:1036px;width:6px;height:6px;background:#8c8c8c;border-radius:50%"></div><svg style="position:absolute;left:364px;top:1030px" width="18" height="17" viewBox="0 0 18 17"><circle cx="9" cy="6" r="4.8" fill="#2c7fd0" stroke="#9cc3ea" stroke-width="1"/><path d="M1.5 16 Q2 11 6 10.6 L12 10.6 Q16 11 16.5 16 Z" fill="#2c7fd0" stroke="#9cc3ea" stroke-width="1"/></svg></div>
<div style="position:absolute;left:383px;top:240px;width:1px;height:798px;background:#3a86d6"></div>
<div style="position:absolute;left:526px;top:240px;width:1px;height:798px;background:#3a86d6"></div>
<div style="position:absolute;left:703px;top:268px;width:1px;height:770px;background:#1c2a3e"></div>
<div style="position:absolute;left:649px;top:62px;width:51px;height:70px;background:#c39bd3;z-index:-0"></div>
<div style="position:absolute;left:-466px;top:104px;width:1000px;text-align:center;font-size:11.8px;color:#a8a8a8;white-space:nowrap;line-height:1;">Back</div>
<div style="position:absolute;left:30.5px;top:125px;width:0;height:0;border-left:3.5px solid transparent;border-right:3.5px solid transparent;border-top:2.975px solid #8a8a8a"></div>
<div style="position:absolute;left:-420px;top:104px;width:1000px;text-align:center;font-size:11.8px;color:#a8a8a8;white-space:nowrap;line-height:1;">Forward</div>
<div style="position:absolute;left:76.5px;top:125px;width:0;height:0;border-left:3.5px solid transparent;border-right:3.5px solid transparent;border-top:2.975px solid #8a8a8a"></div>
<div style="position:absolute;left:-350px;top:104px;width:1000px;text-align:center;font-size:11.8px;color:#444;white-space:nowrap;line-height:1;">Show/Hide</div>
<div style="position:absolute;left:-354px;top:118px;width:1000px;text-align:center;font-size:11.8px;color:#444;white-space:nowrap;line-height:1;">columns...</div>
<div style="position:absolute;left:175.3984375px;top:122px;width:0;height:0;border-left:3.5px solid transparent;border-right:3.5px solid transparent;border-top:2.975px solid #555"></div>
<div style="position:absolute;left:-283px;top:104px;width:1000px;text-align:center;font-size:11.8px;color:#444;white-space:nowrap;line-height:1;">Snapshot</div>
<div style="position:absolute;left:213.5px;top:125px;width:0;height:0;border-left:3.5px solid transparent;border-right:3.5px solid transparent;border-top:2.975px solid #8a8a8a"></div>
<div style="position:absolute;left:-227px;top:104px;width:1000px;text-align:center;font-size:11.8px;color:#444;white-space:nowrap;line-height:1;">Freeze</div>
<div style="position:absolute;left:-231px;top:118px;width:1000px;text-align:center;font-size:11.8px;color:#444;white-space:nowrap;line-height:1;">Point</div>
<div style="position:absolute;left:284.953125px;top:122px;width:0;height:0;border-left:3.5px solid transparent;border-right:3.5px solid transparent;border-top:2.975px solid #555"></div>
<div style="position:absolute;left:-172px;top:104px;width:1000px;text-align:center;font-size:11.8px;color:#444;white-space:nowrap;line-height:1;">Refresh</div>
<div style="position:absolute;left:324.5px;top:125px;width:0;height:0;border-left:3.5px solid transparent;border-right:3.5px solid transparent;border-top:2.975px solid #8a8a8a"></div>
<div style="position:absolute;left:-127px;top:104px;width:1000px;text-align:center;font-size:11.8px;color:#444;white-space:nowrap;line-height:1;">Last</div>
<div style="position:absolute;left:-127px;top:118px;width:1000px;text-align:center;font-size:11.8px;color:#444;white-space:nowrap;line-height:1;">Sign-in</div>
<div style="position:absolute;left:-76px;top:104px;width:1000px;text-align:center;font-size:11.8px;color:#444;white-space:nowrap;line-height:1;">Additional</div>
<div style="position:absolute;left:-76px;top:118px;width:1000px;text-align:center;font-size:11.8px;color:#444;white-space:nowrap;line-height:1;">Info</div>
<div style="position:absolute;left:-22px;top:104px;width:1000px;text-align:center;font-size:11.8px;color:#444;white-space:nowrap;line-height:1;">Mailbox</div>
<div style="position:absolute;left:-22px;top:118px;width:1000px;text-align:center;font-size:11.8px;color:#444;white-space:nowrap;line-height:1;">Info</div>
<div style="position:absolute;left:48px;top:104px;width:1000px;text-align:center;font-size:11.8px;color:#444;white-space:nowrap;line-height:1;">Custom Security</div>
<div style="position:absolute;left:48px;top:118px;width:1000px;text-align:center;font-size:11.8px;color:#444;white-space:nowrap;line-height:1;">Attributes</div>
<div style="position:absolute;left:127px;top:104px;width:1000px;text-align:center;font-size:11.8px;color:#444;white-space:nowrap;line-height:1;">Save</div>
<div style="position:absolute;left:127px;top:118px;width:1000px;text-align:center;font-size:11.8px;color:#444;white-space:nowrap;line-height:1;">All</div>
<div style="position:absolute;left:174px;top:104px;width:1000px;text-align:center;font-size:11.8px;color:#444;white-space:nowrap;line-height:1;">Save</div>
<div style="position:absolute;left:174px;top:118px;width:1000px;text-align:center;font-size:11.8px;color:#444;white-space:nowrap;line-height:1;">Selected</div>
<div style="position:absolute;left:232px;top:104px;width:1000px;text-align:center;font-size:11.8px;color:#444;white-space:nowrap;line-height:1;">Undo</div>
<div style="position:absolute;left:232px;top:118px;width:1000px;text-align:center;font-size:11.8px;color:#444;white-space:nowrap;line-height:1;">All</div>
<div style="position:absolute;left:279px;top:104px;width:1000px;text-align:center;font-size:11.8px;color:#444;white-space:nowrap;line-height:1;">Selected</div>
<div style="position:absolute;left:279px;top:118px;width:1000px;text-align:center;font-size:11.8px;color:#444;white-space:nowrap;line-height:1;">Rows</div>
<div style="position:absolute;left:338px;top:104px;width:1000px;text-align:center;font-size:11.8px;color:#444;white-space:nowrap;line-height:1;">Edit</div>
<div style="position:absolute;left:382px;top:104px;width:1000px;text-align:center;font-size:11.8px;color:#444;white-space:nowrap;line-height:1;">Create</div>
<div style="position:absolute;left:426px;top:104px;width:1000px;text-align:center;font-size:11.8px;color:#444;white-space:nowrap;line-height:1;">Delete</div>
<div style="position:absolute;left:474px;top:104px;width:1000px;text-align:center;font-size:11.8px;color:#444;white-space:nowrap;line-height:1;">Set</div>
<div style="position:absolute;left:474px;top:118px;width:1000px;text-align:center;font-size:11.8px;color:#444;white-space:nowrap;line-height:1;">Manager</div>
<div style="position:absolute;left:527px;top:104px;width:1000px;text-align:center;font-size:11.8px;color:#444;white-space:nowrap;line-height:1;">Remove</div>
<div style="position:absolute;left:527px;top:118px;width:1000px;text-align:center;font-size:11.8px;color:#444;white-space:nowrap;line-height:1;">Manager</div>
<div style="position:absolute;left:581px;top:104px;width:1000px;text-align:center;font-size:11.8px;color:#444;white-space:nowrap;line-height:1;">Reset</div>
<div style="position:absolute;left:581px;top:118px;width:1000px;text-align:center;font-size:11.8px;color:#444;white-space:nowrap;line-height:1;">Password</div>
<div style="position:absolute;left:630px;top:104px;width:1000px;text-align:center;font-size:11.8px;color:#444;white-space:nowrap;line-height:1;">Edit</div>
<div style="position:absolute;left:630px;top:118px;width:1000px;text-align:center;font-size:11.8px;color:#444;white-space:nowrap;line-height:1;">MFA</div>
<div style="position:absolute;left:696px;top:104px;width:1000px;text-align:center;font-size:11.8px;color:#444;white-space:nowrap;line-height:1;">Revoke Session</div>
<div style="position:absolute;left:696px;top:118px;width:1000px;text-align:center;font-size:11.8px;color:#444;white-space:nowrap;line-height:1;">Tokens</div>
<div style="position:absolute;left:773px;top:104px;width:1000px;text-align:center;font-size:11.8px;color:#444;white-space:nowrap;line-height:1;">Create</div>
<div style="position:absolute;left:773px;top:118px;width:1000px;text-align:center;font-size:11.8px;color:#444;white-space:nowrap;line-height:1;">Users</div>
<div style="position:absolute;left:817px;top:104px;width:1000px;text-align:center;font-size:11.8px;color:#444;white-space:nowrap;line-height:1;">Update</div>
<div style="position:absolute;left:817px;top:118px;width:1000px;text-align:center;font-size:11.8px;color:#444;white-space:nowrap;line-height:1;">Users</div>
<div style="position:absolute;left:895px;top:104px;width:1000px;text-align:center;font-size:11.8px;color:#444;white-space:nowrap;line-height:1;">Group</div>
<div style="position:absolute;left:891px;top:118px;width:1000px;text-align:center;font-size:11.8px;color:#444;white-space:nowrap;line-height:1;">Membership...</div>
<div style="position:absolute;left:1430.8828125px;top:122px;width:0;height:0;border-left:3.5px solid transparent;border-right:3.5px solid transparent;border-top:2.975px solid #555"></div>
<div style="position:absolute;left:969px;top:104px;width:1000px;text-align:center;font-size:11.8px;color:#444;white-space:nowrap;line-height:1;">Licenses...</div>
<div style="position:absolute;left:1465.5px;top:125px;width:0;height:0;border-left:3.5px solid transparent;border-right:3.5px solid transparent;border-top:2.975px solid #8a8a8a"></div>
<div style="position:absolute;left:1026px;top:104px;width:1000px;text-align:center;font-size:11.8px;color:#444;white-space:nowrap;line-height:1;">OneDrive</div>
<div style="position:absolute;left:1022px;top:118px;width:1000px;text-align:center;font-size:11.8px;color:#444;white-space:nowrap;line-height:1;">Files...</div>
<div style="position:absolute;left:1541.8828125px;top:122px;width:0;height:0;border-left:3.5px solid transparent;border-right:3.5px solid transparent;border-top:2.975px solid #555"></div>
<div style="position:absolute;left:1097px;top:104px;width:1000px;text-align:center;font-size:11.8px;color:#444;white-space:nowrap;line-height:1;">Mailbox</div>
<div style="position:absolute;left:1093px;top:118px;width:1000px;text-align:center;font-size:11.8px;color:#444;white-space:nowrap;line-height:1;">Permissions...</div>
<div style="position:absolute;left:1632.5625px;top:122px;width:0;height:0;border-left:3.5px solid transparent;border-right:3.5px solid transparent;border-top:2.975px solid #555"></div>
<div style="position:absolute;left:1172px;top:104px;width:1000px;text-align:center;font-size:11.8px;color:#444;white-space:nowrap;line-height:1;">Messages...</div>
<div style="position:absolute;left:1668.5px;top:125px;width:0;height:0;border-left:3.5px solid transparent;border-right:3.5px solid transparent;border-top:2.975px solid #8a8a8a"></div>
<div style="position:absolute;left:1230px;top:104px;width:1000px;text-align:center;font-size:11.8px;color:#444;white-space:nowrap;line-height:1;">Events...</div>
<div style="position:absolute;left:1726.5px;top:125px;width:0;height:0;border-left:3.5px solid transparent;border-right:3.5px solid transparent;border-top:2.975px solid #8a8a8a"></div>
<div style="position:absolute;left:-294px;top:137px;width:1000px;text-align:center;font-size:11.8px;color:#8a8a8a;white-space:nowrap;line-height:1;">View</div>
<div style="position:absolute;left:-50px;top:137px;width:1000px;text-align:center;font-size:11.8px;color:#8a8a8a;white-space:nowrap;line-height:1;">Load</div>
<div style="position:absolute;left:528px;top:137px;width:1000px;text-align:center;font-size:11.8px;color:#8a8a8a;white-space:nowrap;line-height:1;">Edit</div>
<div style="position:absolute;left:795px;top:137px;width:1000px;text-align:center;font-size:11.8px;color:#8a8a8a;white-space:nowrap;line-height:1;">From File</div>
<div style="position:absolute;left:1118px;top:137px;width:1000px;text-align:center;font-size:11.8px;color:#8a8a8a;white-space:nowrap;line-height:1;">User Management</div>
<div style="position:absolute;left:152px;top:137px;width:1000px;text-align:center;font-size:11.8px;color:#9a9a9a;white-space:nowrap;line-height:1;">Save</div>
<div style="position:absolute;left:258px;top:137px;width:1000px;text-align:center;font-size:11.8px;color:#9a9a9a;white-space:nowrap;line-height:1;">Undo</div>
<div style="position:absolute;left:109px;top:64px;width:1px;height:84px;background:#e4e4e4"></div>
<div style="position:absolute;left:186px;top:64px;width:1px;height:84px;background:#e4e4e4"></div>
<div style="position:absolute;left:247px;top:64px;width:1px;height:84px;background:#e4e4e4"></div>
<div style="position:absolute;left:299px;top:64px;width:1px;height:84px;background:#e4e4e4"></div>
<div style="position:absolute;left:704px;top:64px;width:1px;height:84px;background:#e4e4e4"></div>
<div style="position:absolute;left:809px;top:64px;width:1px;height:84px;background:#e4e4e4"></div>
<div style="position:absolute;left:1245px;top:64px;width:1px;height:84px;background:#e4e4e4"></div>
<div style="position:absolute;left:1344px;top:64px;width:1px;height:84px;background:#e4e4e4"></div>
<div style="position:absolute;left:1889px;top:64px;width:1px;height:84px;background:#e4e4e4"></div>
<div style="position:absolute;left:1776px;top:69px;font-size:11.8px;color:#444;white-space:nowrap;line-height:1;">Message Rules...</div>
<div style="position:absolute;left:1776px;top:93px;font-size:11.8px;color:#444;white-space:nowrap;line-height:1;">Contacts...</div>
<div style="position:absolute;left:1776px;top:116px;font-size:11.8px;color:#444;white-space:nowrap;line-height:1;">Show Chats...</div>
<div style="position:absolute;left:1872.5px;top:72px;width:0;height:0;border-left:3.5px solid transparent;border-right:3.5px solid transparent;border-top:2.975px solid #666"></div>
<div style="position:absolute;left:1840.5px;top:95px;width:0;height:0;border-left:3.5px solid transparent;border-right:3.5px solid transparent;border-top:2.975px solid #666"></div>
<div style="position:absolute;left:1855.5px;top:119px;width:0;height:0;border-left:3.5px solid transparent;border-right:3.5px solid transparent;border-top:2.975px solid #666"></div>
<svg style="position:absolute;left:0;top:0" width="1919" height="200"><path d="M26 79.5 H41 M33 72.5 L26 79.5 L33 86.5" stroke="#8d8d8d" stroke-width="3.2" fill="none"/><path d="M73 79.5 H88 M81 72.5 L88 79.5 L81 86.5" stroke="#8d8d8d" stroke-width="3.2" fill="none"/><rect x="136.5" y="66" width="26" height="25.5" fill="#fff" stroke="#8a8a8a" stroke-width="1"/><rect x="136" y="65.5" width="27" height="6" fill="#3a72b8"/><path d="M143.5 71.5 V91.5 M150 71.5 V91.5 M156.5 71.5 V83" stroke="#8a8a8a" stroke-width="1"/><circle cx="158.5" cy="87.5" r="6.5" fill="#fff" stroke="#5f6f86" stroke-width="1.5"/><path d="M155 91 L158 86.5 L162 84 L159 88.5Z" fill="#d9453a"/><path d="M162 84 L159 88.5 L158 86.5Z" fill="#3a72b8"/><path d="M202.5 71 V66 H208 M226 66 H232 V71 M202.5 84 V89.5 H208" stroke="#6a6a6a" stroke-width="1.8" fill="none"/><circle cx="217" cy="77.5" r="5.5" fill="none" stroke="#6a6a6a" stroke-width="1.8"/><path d="M221 81.5 L224 84.5" stroke="#6a6a6a" stroke-width="2"/><circle cx="226.5" cy="89" r="7" fill="#3e9a6c" stroke="#fff" stroke-width="1"/><path d="M222.5 89 H230.5 M226.5 85 V93" stroke="#fff" stroke-width="2.2"/><path d="M260 66 H281.5 L285 69.5 V91.5 H260Z" fill="#555"/><path d="M266 67.8 H277 V74.5 Q277 76 275.5 76 H267.5 Q266 76 266 74.5Z" fill="#fff"/><rect x="272.5" y="69.5" width="3" height="4.5" fill="#555"/><path d="M263 90 V82 Q263 80.2 265 80.2 H279 Q280.8 80.2 280.8 82 V90Z" fill="#fff"/><circle cx="282.2" cy="88.5" r="7" fill="#3e9a6c" stroke="#fff" stroke-width="1"/><path d="M278.2 88.5 H286.2 M282.2 84.5 V92.5" stroke="#fff" stroke-width="2.2"/><path d="M340.5 73 A12 12 0 1 0 341.5 82" stroke="#3f9a6e" stroke-width="3.4" fill="none"/><path d="M344.5 64.5 V76.5 H333Z" fill="#3f9a6e"/><circle cx="371.5" cy="73.5" r="7" fill="#fff" stroke="#9a8f84" stroke-width="1.2"/><path d="M371 69 V74 H375" stroke="#9a8f84" stroke-width="1.1" fill="none"/><circle cx="365" cy="77.5" r="3.6" fill="#3a72b8"/><path d="M359.5 87 Q360 81.5 365 81.5 Q370 81.5 370.5 87Z" fill="#3a72b8"/><path d="M379 76 H384 V83 H388 L381.5 90.5 L375 83 H379Z" fill="#3a72b8"/><rect x="375" y="92" width="13" height="2.6" fill="#3a72b8"/><path d="M421 64 H427.5 V77 H435.5 L424.3 89.5 L413 77 H421Z" fill="#3a72b8"/><rect x="413.5" y="91.5" width="22" height="3.8" fill="#3a72b8"/><path d="M470 70 H486 Q494 70 494 78 V89.5 H463 V77 Q463 70 470 70Z M470 70 Q477 70 477 77 V89.5" fill="#fff" stroke="#3a72b8" stroke-width="2"/><rect x="467" y="76" width="5" height="2" fill="#3a72b8"/><path d="M485.5 76 H490 V84 H494 L487.8 91 L481.5 84 H485.5Z" fill="#3a72b8" stroke="#fff" stroke-width="0.8"/><rect x="481" y="92.5" width="14" height="2" fill="#3a72b8"/><path d="M548 63.5 Q540 67.5 533 67.5 Q532.5 86 548 95.5 Q563.5 86 563 67.5 Q556 67.5 548 63.5Z" fill="#fff" stroke="#3a72b8" stroke-width="1.6"/><path d="M548 63.5 Q540 67.5 533 67.5 Q532.5 86 548 95.5Z" fill="#3a72b8"/><path d="M555 76 H559 V84 H563 L557 91 L551 84 H555Z" fill="#3a72b8"/><rect x="551" y="92.5" width="12" height="2" fill="#3a72b8"/><circle cx="627" cy="79.5" r="14" fill="#3e9a6c"/><path d="M620 80 L625 85 L634.5 74.5" stroke="#fff" stroke-width="3.6" fill="none"/><circle cx="674" cy="79.5" r="14" fill="#3e9a6c"/><path d="M667 80 L672 85 L681.5 74.5" stroke="#fff" stroke-width="3.6" fill="none"/><rect x="678.5" y="83.5" width="11" height="11" fill="#fff" stroke="#777" stroke-width="1.4"/><path d="M681.0 89.0 L683.3 91.5 L687.5 86.5" stroke="#3e9a6c" stroke-width="1.8" fill="none"/><path d="M723.5 80.5 Q732.5 72.5 739.5 75.5 Q746.5 79.5 744.5 88.5" stroke="#3a72b8" stroke-width="4.6" fill="none"/><path d="M717.5 88.5 L720.5 73.5 L731.5 84.5Z" fill="#3a72b8"/><path d="M771 80.5 Q780 72.5 787 75.5 Q794 79.5 792 88.5" stroke="#3a72b8" stroke-width="4.6" fill="none"/><path d="M765 88.5 L768 73.5 L779 84.5Z" fill="#3a72b8"/><rect x="784" y="83.5" width="11" height="11" fill="#fff" stroke="#777" stroke-width="1.4"/><path d="M786.5 89.0 L788.8 91.5 L793 86.5" stroke="#3e9a6c" stroke-width="1.8" fill="none"/><path d="M823 94.5 L826 86 L848.5 63.5 Q851 62 853 64 Q854.5 66 853 68 L830.5 90.5Z" fill="#3a72b8"/><path d="M826 86 L830.5 90.5" stroke="#fff" stroke-width="1"/><path d="M866.5 64.5 H882 L890.5 73 V93.5 H866.5Z" fill="#fff" stroke="#9a9a9a" stroke-width="1.2"/><path d="M882 64.5 V73 H890.5" fill="none" stroke="#9a9a9a" stroke-width="1.2"/><circle cx="890" cy="88.5" r="7" fill="#3e9a6c" stroke="#fff" stroke-width="1"/><path d="M886 88.5 H894 M890 84.5 V92.5" stroke="#fff" stroke-width="2.2"/><rect x="913" y="65.5" width="27" height="4" fill="#3a72b8"/><rect x="923" y="63" width="7" height="3" fill="#3a72b8"/><rect x="915" y="72" width="23.5" height="23.5" fill="#6a6a6a"/><rect x="919" y="75" width="3.2" height="17.5" fill="#fff"/><rect x="925" y="75" width="3.2" height="17.5" fill="#fff"/><rect x="931" y="75" width="3.2" height="17.5" fill="#fff"/><g transform="translate(962.5,66) scale(1)"><circle cx="11.5" cy="7" r="6.3" fill="#fff" stroke="#3a72b8" stroke-width="2"/><path d="M5.2 7.5 A6.3 6.3 0 0 1 17.8 7.5 Q15 4.5 11.5 5 Q8 4.5 5.2 7.5Z" fill="#3a72b8"/><path d="M0 24 Q0.5 15.5 7 14.5 L11.5 20 L16 14.5 Q22.5 15.5 23 24Z" fill="#3a72b8"/><path d="M10.7 15.5 L12.3 15.5 L12.8 20 L11.5 22 L10.2 20Z" fill="#3a72b8"/></g><g transform="translate(1014,66) scale(1)"><circle cx="11.5" cy="7" r="6.3" fill="#fff" stroke="#3a72b8" stroke-width="2"/><path d="M5.2 7.5 A6.3 6.3 0 0 1 17.8 7.5 Q15 4.5 11.5 5 Q8 4.5 5.2 7.5Z" fill="#3a72b8"/><path d="M0 24 Q0.5 15.5 7 14.5 L11.5 20 L16 14.5 Q22.5 15.5 23 24Z" fill="#3a72b8"/><path d="M10.7 15.5 L12.3 15.5 L12.8 20 L11.5 22 L10.2 20Z" fill="#3a72b8"/></g><circle cx="1035" cy="85.5" r="7" fill="#cf4a2d" stroke="#fff" stroke-width="1"/><path d="M1032 82.5 L1038 88.5 M1038 82.5 L1032 88.5" stroke="#fff" stroke-width="2"/><rect x="1067" y="71.7" width="27.5" height="9.7" fill="#6a6a6a"/><path d="M1073.5 73.3 V80.1 M1070.5 75 L1076.5 78.4 M1076.5 75 L1070.5 78.4" stroke="#e8e8e8" stroke-width="1.3"/><path d="M1080.8 73.3 V80.1 M1077.8 75 L1083.8 78.4 M1083.8 75 L1077.8 78.4" stroke="#e8e8e8" stroke-width="1.3"/><path d="M1088 73.3 V80.1 M1085 75 L1091 78.4 M1091 75 L1085 78.4" stroke="#e8e8e8" stroke-width="1.3"/><path d="M1091.6 81.8 A5.5 5.5 0 1 1 1084.5 85.1" stroke="#fff" stroke-width="4" fill="none"/><path d="M1091.6 81.8 A5.5 5.5 0 1 1 1084.5 85.1" stroke="#3a72b8" stroke-width="2" fill="none"/><path d="M1081.5 84 L1087 84 L1084.3 80Z" fill="#3a72b8"/><path d="M1128 64.5 Q1122.5 64.5 1122.5 71.5 V74 M1133.5 74 V71.5 Q1133.5 64.5 1128 64.5" stroke="#3a72b8" stroke-width="1.8" fill="none"/><path d="M1128 73.5 Q1121 76 1115.5 75.5 Q1115 88.5 1128 95 Q1141 88.5 1140.5 75.5 Q1135 76 1128 73.5Z" fill="#fff" stroke="#3a72b8" stroke-width="1.8"/><circle cx="1128.3" cy="81.5" r="2.5" fill="#3a72b8"/><path d="M1123.5 89 Q1124 84.5 1128.3 84.5 Q1132.5 84.5 1133 89Z" fill="#3a72b8"/><path d="M1130 93.5 L1131 89.5 L1143.5 77.5 L1146 80 L1133.5 92Z" fill="#3a72b8" stroke="#fff" stroke-width="0.8"/><path d="M1183 70.5 L1199 65.5 L1206 67.5 V88 L1199 90.5 L1183 86Z" fill="#6f6f6f"/><path d="M1188.5 71.5 L1199 69 V86.5 L1188.5 84.5Z" fill="#fff"/><circle cx="1204" cy="86.5" r="7" fill="#cf4a2d" stroke="#fff" stroke-width="1"/><path d="M1201 83.5 L1207 89.5 M1207 83.5 L1201 89.5" stroke="#fff" stroke-width="2"/><path d="M1259 69.5 V95.5" stroke="#8a8a8a" stroke-width="1"/><path d="M1261 67.5 V95.5" stroke="#8a8a8a" stroke-width="1"/><path d="M1263 65.5 H1280 L1287 72.5 V95.5 H1263Z" fill="#fff" stroke="#8a8a8a" stroke-width="1"/><path d="M1259 69.5 V66.5 H1277" stroke="#b0b0b0" stroke-width="1" fill="none"/><path d="M1261 67.5 V66.0 H1278" stroke="#b0b0b0" stroke-width="1" fill="none"/><path d="M1280 65.5 V72.5 H1287" fill="none" stroke="#8a8a8a" stroke-width="1"/><circle cx="1281" cy="88.5" r="7" fill="#3e9a6c" stroke="#fff" stroke-width="1"/><path d="M1277 88.5 H1285 M1281 84.5 V92.5" stroke="#fff" stroke-width="2.2"/><path d="M1303 69.5 V95.5" stroke="#8a8a8a" stroke-width="1"/><path d="M1305 67.5 V95.5" stroke="#8a8a8a" stroke-width="1"/><path d="M1307 65.5 H1324 L1331 72.5 V95.5 H1307Z" fill="#fff" stroke="#8a8a8a" stroke-width="1"/><path d="M1303 69.5 V66.5 H1321" stroke="#b0b0b0" stroke-width="1" fill="none"/><path d="M1305 67.5 V66.0 H1322" stroke="#b0b0b0" stroke-width="1" fill="none"/><path d="M1324 65.5 V72.5 H1331" fill="none" stroke="#8a8a8a" stroke-width="1"/><path d="M1316 93 L1317.5 88.5 L1328.5 77.5 L1331 80 L1320 91Z" fill="#3a72b8"/><circle cx="1402" cy="72.5" r="5.5" fill="#3a72b8"/><path d="M1395 88 Q1395 79 1402 79 Q1410 79 1410 88Z" fill="#3a72b8"/><circle cx="1392.5" cy="76" r="6.2" fill="#3a72b8" stroke="#fff" stroke-width="1.2"/><path d="M1381 91.5 Q1381 83 1392.5 83 Q1404 83 1404 91.5Z" fill="#3a72b8" stroke="#fff" stroke-width="1.2"/><rect x="1454.5" y="66.5" width="31.5" height="24" fill="#fff" stroke="#3a72b8" stroke-width="1.2"/><rect x="1454" y="66" width="32.5" height="5.5" fill="#3a72b8"/><circle cx="1462.5" cy="77.5" r="3.5" fill="#e6a13a"/><rect x="1461" y="79" width="3.2" height="9.5" fill="#e6a13a"/><rect x="1464" y="84" width="2.5" height="2" fill="#e6a13a"/><path d="M1471 77.5 H1482 M1471 80.5 H1482 M1471 83.5 H1482" stroke="#b9b9b9" stroke-width="1.3"/><path d="M1512.5 88.5 Q1508.5 88.5 1509.5 83 Q1510.5 79 1515.5 79.5 Q1517 73 1524 73.5 Q1526.5 66.5 1533.5 67 Q1541.5 68 1541.5 76 Q1544 78.5 1542 84 Z" fill="#3a72b8"/><path d="M1524 73.5 Q1531 73 1533 80" stroke="#fff" stroke-width="1.2" fill="none"/><path d="M1531.5 82.5 H1538.5 L1542 86 V95 H1531.5Z" fill="#fff" stroke="#777" stroke-width="1.4"/><path d="M1588 70 H1604 Q1612.5 70 1612.5 78 V89.5 H1581.5 V77 Q1581.5 70 1588 70Z M1588 70 Q1595 70 1595 77 V89.5" fill="#fff" stroke="#3a72b8" stroke-width="2"/><path d="M1601 78 H1606 V81" stroke="#3a72b8" stroke-width="1.8" fill="none"/><circle cx="1585.5" cy="68.5" r="4.2" fill="#e6a13a"/><rect x="1583.8" y="70" width="3.4" height="10" fill="#e6a13a"/><rect x="1587" y="75" width="2.2" height="2" fill="#e6a13a"/><circle cx="1585.5" cy="67.5" r="1.2" fill="#fff"/><path d="M1658 73 L1673 64.5 L1687.5 73 V93 H1658Z" fill="#fff" stroke="#8a8a8a" stroke-width="1.2"/><path d="M1658 73 L1668 81.5 H1678 L1687.5 73 M1658 93 L1668 81.5 M1678 81.5 L1687.5 93" stroke="#8a8a8a" stroke-width="1.2" fill="none"/><rect x="1716.5" y="68" width="28.5" height="26" fill="#fff" stroke="#8a8a8a" stroke-width="1.2"/><rect x="1716" y="67.5" width="29.5" height="4.5" fill="#3a72b8"/><path d="M1723.5 65.5 V70 M1737 65.5 V70" stroke="#666" stroke-width="1.5"/><path d="M1720 79.5 H1742 M1720 84.5 H1742 M1720 89 H1742" stroke="#5b8dd0" stroke-width="1.3"/><path d="M1725 76 V91.5 M1731 76 V91.5 M1737 76 V91.5 M1720 76 H1742 V91.5 H1720Z" stroke="#a8a8a8" stroke-width="1" fill="none"/><rect x="1761.5" y="68.5" width="11" height="8" fill="#fff" stroke="#666" stroke-width="1"/><rect x="1769" y="69.8" width="2" height="2" fill="#d33"/><path d="M1757.5 70.5 H1761 M1758.5 72.5 H1761 M1759.5 74.5 H1761 M1763.5 71.5 H1767 M1763.5 73.5 H1767" stroke="#5077b8" stroke-width="0.9"/><rect x="1758" y="90" width="13" height="14.5" rx="1" fill="#fff" stroke="#3a72b8" stroke-width="1.4"/><circle cx="1764.3" cy="94.5" r="2.3" fill="#3a72b8"/><path d="M1760.5 100.5 Q1761 97.5 1764.3 97.5 Q1767.5 97.5 1768 100.5Z" fill="#3a72b8"/><path d="M1764.5 113.5 A6.5 6.5 0 1 1 1762 126 L1758.5 127 L1759.5 123.5 A6.5 6.5 0 0 1 1764.5 113.5Z" fill="#fff" stroke="#a36fc2" stroke-width="1.2"/><path d="M1762 118.5 H1767.5 M1762 121.5 H1765.5" stroke="#a36fc2" stroke-width="1.1"/><circle cx="18.5" cy="14" r="7.3" fill="none" stroke="#9159a6" stroke-width="1.3"/><path d="M13.5 11 Q18.5 9 23.5 11 L22.5 16 Q20.5 16 19.5 14.5 L18.5 20 L17.5 14.5 Q16.5 16 14.5 16Z" fill="#9159a6"/><circle cx="16.5" cy="10.5" r="1" fill="#fff"/><circle cx="20.5" cy="10.5" r="1" fill="#fff"/><path d="M36 12 H45" stroke="#333" stroke-width="1.5"/><path d="M36 14.5 H45 L40.5 19Z" fill="#333"/><path d="M1842 19 H1851" stroke="#9a9a9a" stroke-width="1"/><rect x="1871.5" y="12.5" width="9" height="9" fill="none" stroke="#9a9a9a" stroke-width="1"/><rect x="1871.5" y="12.5" width="9" height="1.8" fill="#9a9a9a"/><path d="M1900.5 12.5 L1910 22 M1910 12.5 L1900.5 22" stroke="#9a9a9a" stroke-width="1.1"/><path d="M1857.5 45.5 L1860.7 42 L1864 45.5" stroke="#555" stroke-width="1.6" fill="none"/><path d="M1877.5 46 A6.8 6.8 0 0 1 1890.5 46" stroke="#9159a6" stroke-width="1.4" fill="none"/><circle cx="1884" cy="44" r="3.4" fill="#9159a6"/><circle cx="1907.5" cy="42.5" r="8" fill="#2563ae"/><text x="1907.5" y="47.5" font-size="13" font-weight="bold" fill="#fff" text-anchor="middle" font-family="Liberation Sans">?</text><path d="M737 44 L740 47.5 L746 40.5" stroke="#222" stroke-width="1.7" fill="none"/><rect x="1891" y="164" width="16" height="2.5" fill="#3a72b8"/><rect x="1896.5" y="162.5" width="5" height="2" fill="#3a72b8"/><rect x="1892" y="168" width="14" height="14" fill="#666"/><rect x="1894.5" y="170" width="2" height="10" fill="#fff"/><rect x="1898" y="170" width="2" height="10" fill="#fff"/><rect x="1901.5" y="170" width="2" height="10" fill="#fff"/><rect x="18" y="171.5" width="8.5" height="8" rx="1" fill="#e9b761"/><path d="M19.5 172 V169 Q22.2 165 25 169 V172" stroke="#e9b761" stroke-width="1.6" fill="none"/><path d="M136 175 L139 175 L137.5 176.5Z" fill="#888"/></svg>
<svg style="position:absolute;left:0;top:0" width="1919" height="1079"><path d="M1863 205.5 L1867.5 201 L1872 205.5Z" fill="#4a4f70"/><path d="M1863.5 1026 L1872 1026 L1867.7 1031Z" fill="#4a4f70"/><path d="M1888 210.5 L1882.5 216 L1888 221.5" stroke="#fff" stroke-width="1.6" fill="none"/><rect x="1894.5" y="205.5" width="17" height="22" fill="none" stroke="#fff" stroke-width="1.4"/><rect x="1897" y="210.5" width="1.3" height="1.3" fill="#fff"/><rect x="1899.5" y="210.5" width="9" height="1.5" fill="#fff"/><rect x="1897" y="215" width="1.3" height="1.3" fill="#fff"/><rect x="1899.5" y="215" width="7" height="1.5" fill="#fff"/><rect x="1897" y="219.5" width="1.3" height="1.3" fill="#fff"/><rect x="1899.5" y="219.5" width="4" height="1.5" fill="#fff"/><rect x="1897" y="224" width="1.3" height="1.3" fill="#fff"/><rect x="1899.5" y="224" width="8" height="1.5" fill="#fff"/><path d="M316 610.5 L310.5 616 L316 621.5" stroke="#fff" stroke-width="1.4" fill="none"/></svg>
<div style="position:absolute;left:607px;top:405px;width:449px;height:169px;background:#fff;border:1px solid #c9c9c9;border-radius:7px;box-shadow:0 10px 40px rgba(0,0,0,.30), 0 2px 8px rgba(0,0,0,.12);overflow:hidden"></div>
<div style="position:absolute;left:608px;top:406px;width:447px;height:27px;background:#f2f3f9;border-radius:7px 7px 0 0"></div>
<svg style="position:absolute;left:613px;top:410px" width="16" height="16" viewBox="0 0 16 16"><circle cx="8" cy="8" r="6.8" fill="none" stroke="#9159a6" stroke-width="1.4"/><path d="M4 5 Q8 3 12 5 L11 9 L9 8 L8 13 L7 8 L5 9Z" fill="#9159a6"/></svg>
<div style="position:absolute;left:636px;top:412px;font-size:12.3px;color:#222;white-space:nowrap;line-height:1;">sapio365</div>
<svg style="position:absolute;left:1034px;top:412px" width="13" height="13" viewBox="0 0 13 13"><path d="M1 1 L12 12 M12 1 L1 12" stroke="#222" stroke-width="1.3"/></svg>
<div style="position:absolute;left:608px;top:525px;width:447px;height:48px;background:#f0f0f0;border-top:1px solid #dfdfdf;border-radius:0 0 7px 7px"></div>
<div style="position:absolute;left:666px;top:449px;font-size:15.2px;color:#2b4fa0;white-space:nowrap;line-height:1;">Save Selected Changes</div>
<div style="position:absolute;left:666px;top:485px;font-size:12.3px;color:#222;white-space:nowrap;line-height:1;">Are you sure?</div>
<div style="position:absolute;left:621px;top:446px;width:32px;height:32px;border-radius:50%;background:radial-gradient(circle at 40% 30%,#8fb3ee 0,#3a66c8 45%,#173c94 100%);box-shadow:0 0 0 1px #c0c8d8;"></div>
<div style="position:absolute;left:628px;top:450px;font-size:25px;color:#fff;white-space:nowrap;line-height:1;font-weight:bold">?</div>
<div style="position:absolute;left:882px;top:537px;width:77px;height:26px;background:#fcfcfc;border:1px solid #4f8ad6;border-radius:3px"></div>
<div style="position:absolute;left:420px;top:543px;width:1000px;text-align:center;font-size:12.3px;color:#222;white-space:nowrap;line-height:1;">Yes</div>
<div style="position:absolute;left:968px;top:537px;width:77px;height:26px;background:#fdfdfd;border:1px solid #e0e0e0;border-radius:3px"></div>
<div style="position:absolute;left:506px;top:543px;width:1000px;text-align:center;font-size:12.3px;color:#222;white-space:nowrap;line-height:1;">No</div>
<div style="position:absolute;left:593px;top:57px;width:227px;height:87px;border:5px solid #ee22aa"></div></body></html>
